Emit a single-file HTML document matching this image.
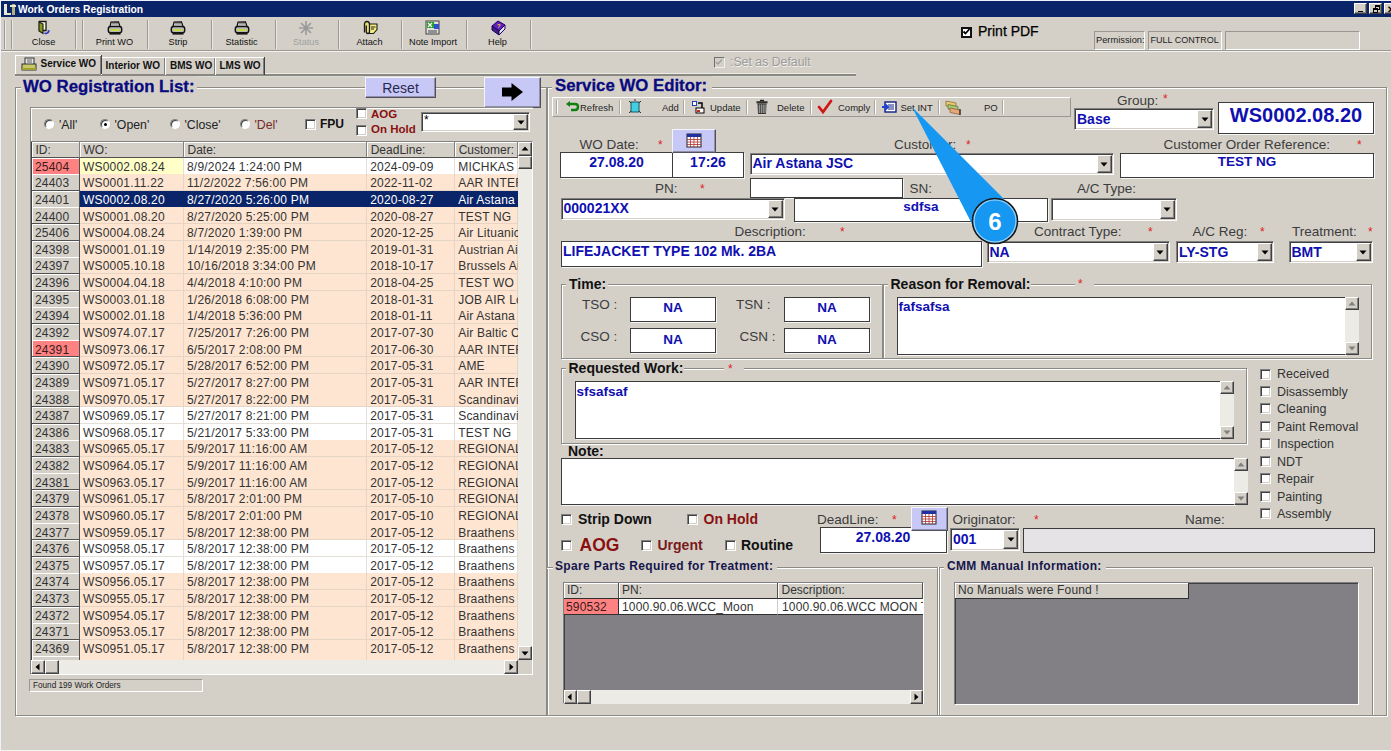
<!DOCTYPE html><html><head><meta charset="utf-8"><style>
*{margin:0;padding:0;box-sizing:border-box}
html,body{width:1391px;height:751px;overflow:hidden;background:#d4d0c8;font-family:"Liberation Sans",sans-serif;color:#000}
.a{position:absolute}
.t{white-space:nowrap}
.gb{border:1px solid #8c8a85;box-shadow:inset 1px 1px 0 #fff,1px 1px 0 #fff}
.tb{background:#fff;border:1px solid #3c3c3c;box-shadow:1px 1px 0 #f4f4f4}
.cb{background:#fff;border:1px solid;border-color:#808080 #fff #fff #808080;box-shadow:inset 1px 1px 0 #404040,inset -1px -1px 0 #d4d0c8}
.btn{background:#d4d0c8;border:1px solid;border-color:#fff #404040 #404040 #fff;box-shadow:inset -1px -1px 0 #808080}
.chk{background:#fff;border:1px solid;border-color:#808080 #fff #fff #808080;box-shadow:inset 1px 1px 0 #404040,inset -1px -1px 0 #d4d0c8}
.lav{background:#c8c8f6;border:1px solid;border-color:#f4f4ff #505060 #505060 #f4f4ff;box-shadow:inset -1px -1px 0 #9090a8}
.blue{color:#1010b0;font-weight:bold}
.red{color:#d02020}
.gl{color:#3c3c3c}
</style></head><body>
<div class="a " style="left:0px;top:0px;width:1391px;height:1px;background:#eef2fa"></div>
<div class="a " style="left:0px;top:0px;width:1px;height:751px;background:#eef2fa"></div>
<div class="a " style="left:1px;top:1px;width:1390px;height:16px;background:#0a246a"></div>
<div class="a t" style="left:18px;top:4.88px;font-size:10.3px;line-height:10.3px;text-align:left;white-space:nowrap;color:#fff;font-weight:bold">Work Orders Registration</div>
<svg class="a" style="left:3px;top:2px" width="14" height="14" viewBox="0 0 14 14"><rect x="1" y="2" width="3" height="11" fill="#e8e8d0"/><rect x="1" y="11" width="7" height="2" fill="#e8e8d0"/><rect x="9" y="2" width="3" height="11" fill="#b0b080"/><rect x="7" y="3" width="6" height="2" fill="#e8e8d0"/></svg>
<div class="a btn" style="left:1354px;top:3px;width:13px;height:11px;"></div>
<div class="a btn" style="left:1369px;top:3px;width:13px;height:11px;"></div>
<div class="a btn" style="left:1384px;top:3px;width:13px;height:11px;"></div>
<div class="a " style="left:1358px;top:10.5px;width:5px;height:1.5px;background:#000"></div>
<div class="a " style="left:1375px;top:5px;width:5px;height:5px;border:1px solid #000;border-top-width:2px"></div>
<div class="a " style="left:1372.5px;top:7.5px;width:5px;height:5px;background:#d4d0c8;border:1px solid #000;border-top-width:2px"></div>
<div class="a t" style="left:1387px;top:4.54px;font-size:10px;line-height:10px;text-align:left;white-space:nowrap;font-weight:bold">✕</div>
<div class="a " style="left:1px;top:50px;width:1390px;height:1px;background:#9a9893"></div>
<div class="a " style="left:1px;top:51px;width:1390px;height:1px;background:#f4f3ef"></div>
<div class="a " style="left:4px;top:20px;width:1px;height:29px;background:#9c9a95;box-shadow:1px 0 0 #ebe9e4"></div>
<div class="a " style="left:11px;top:20px;width:1px;height:29px;background:#9c9a95;box-shadow:1px 0 0 #ebe9e4"></div>
<div class="a " style="left:75px;top:20px;width:1px;height:29px;background:#9c9a95;box-shadow:1px 0 0 #ebe9e4"></div>
<div class="a " style="left:82px;top:20px;width:1px;height:29px;background:#9c9a95;box-shadow:1px 0 0 #ebe9e4"></div>
<div class="a " style="left:147px;top:20px;width:1px;height:29px;background:#9c9a95;box-shadow:1px 0 0 #ebe9e4"></div>
<div class="a " style="left:211px;top:20px;width:1px;height:29px;background:#9c9a95;box-shadow:1px 0 0 #ebe9e4"></div>
<div class="a " style="left:275px;top:20px;width:1px;height:29px;background:#9c9a95;box-shadow:1px 0 0 #ebe9e4"></div>
<div class="a " style="left:338px;top:20px;width:1px;height:29px;background:#9c9a95;box-shadow:1px 0 0 #ebe9e4"></div>
<div class="a " style="left:401px;top:20px;width:1px;height:29px;background:#9c9a95;box-shadow:1px 0 0 #ebe9e4"></div>
<div class="a " style="left:466px;top:20px;width:1px;height:29px;background:#9c9a95;box-shadow:1px 0 0 #ebe9e4"></div>
<div class="a " style="left:530px;top:20px;width:1px;height:29px;background:#9c9a95;box-shadow:1px 0 0 #ebe9e4"></div>
<div class="a t" style="left:3.5px;top:38.01px;font-size:9.2px;line-height:9.2px;text-align:center;width:80px;color:#111">Close</div>
<svg class="a" style="left:34.5px;top:19px" width="18" height="18" viewBox="0 0 18 18"><path d="M4.5 2.5 H11 V11.5 H4.5 Z" fill="#f8f8e0" stroke="#1a1a1a" stroke-width="1.3"/><path d="M4 3 L8 5 L8 14.5 L4 12 Z" fill="#8a9a18" stroke="#1a1a1a" stroke-width="1.1"/><path d="M9.5 14 q2.5 1.5 4.5 -2" stroke="#3040c0" stroke-width="1.6" fill="none"/><path d="M12.5 11 L15 11.5 L13.5 13.5 Z" fill="#3040c0"/></svg>
<div class="a t" style="left:74.5px;top:38.01px;font-size:9.2px;line-height:9.2px;text-align:center;width:80px;color:#111">Print WO</div>
<svg class="a" style="left:105.5px;top:19px" width="18" height="18" viewBox="0 0 18 18"><path d="M5 3.2 L12.5 2.8 L14 7.5 L4 7.5 Z" fill="#d0d0d0" stroke="#111" stroke-width="1.2"/><path d="M6 4.8 H12" stroke="#777"/><rect x="2.3" y="7.5" width="13.4" height="6.3" rx="2.2" fill="#b8b8b8" stroke="#111" stroke-width="1.4"/><rect x="4.5" y="10.3" width="9" height="1.6" fill="#c8e020"/><rect x="3.5" y="13.2" width="11" height="2.4" fill="#161616"/></svg>
<div class="a t" style="left:138px;top:38.01px;font-size:9.2px;line-height:9.2px;text-align:center;width:80px;color:#111">Strip</div>
<svg class="a" style="left:169px;top:19px" width="18" height="18" viewBox="0 0 18 18"><path d="M5 3.2 L12.5 2.8 L14 7.5 L4 7.5 Z" fill="#d0d0d0" stroke="#111" stroke-width="1.2"/><path d="M6 4.8 H12" stroke="#777"/><rect x="2.3" y="7.5" width="13.4" height="6.3" rx="2.2" fill="#b8b8b8" stroke="#111" stroke-width="1.4"/><rect x="4.5" y="10.3" width="9" height="1.6" fill="#c8e020"/><rect x="3.5" y="13.2" width="11" height="2.4" fill="#161616"/></svg>
<div class="a t" style="left:201.5px;top:38.01px;font-size:9.2px;line-height:9.2px;text-align:center;width:80px;color:#111">Statistic</div>
<svg class="a" style="left:232.5px;top:19px" width="18" height="18" viewBox="0 0 18 18"><path d="M5 3.2 L12.5 2.8 L14 7.5 L4 7.5 Z" fill="#d0d0d0" stroke="#111" stroke-width="1.2"/><path d="M6 4.8 H12" stroke="#777"/><rect x="2.3" y="7.5" width="13.4" height="6.3" rx="2.2" fill="#b8b8b8" stroke="#111" stroke-width="1.4"/><rect x="4.5" y="10.3" width="9" height="1.6" fill="#c8e020"/><rect x="3.5" y="13.2" width="11" height="2.4" fill="#161616"/></svg>
<div class="a t" style="left:266px;top:38.01px;font-size:9.2px;line-height:9.2px;text-align:center;width:80px;color:#a0a0a0">Status</div>
<svg class="a" style="left:297px;top:19px" width="18" height="18" viewBox="0 0 18 18"><g stroke="#9a9a9a" stroke-width="1.6"><path d="M9 2 V16 M2 9 H16 M4 4 L14 14 M14 4 L4 14"/></g></svg>
<div class="a t" style="left:329.5px;top:38.01px;font-size:9.2px;line-height:9.2px;text-align:center;width:80px;color:#111">Attach</div>
<svg class="a" style="left:360.5px;top:19px" width="18" height="18" viewBox="0 0 18 18"><path d="M6.5 5 H16 V10.5 L12.5 14.5 H6.5 Z" fill="#f4ee80" stroke="#1a1a1a" stroke-width="1.1"/><path d="M10 8 H14.5 M10 10 H13" stroke="#1a1a1a"/><path d="M3.5 13.5 V5.5 q0 -3 2.5 -3 q2.5 0 2.5 3 V12.5 q0 2 -1.6 2 q-1.6 0 -1.6 -2 V6.5" stroke="#1a1a1a" stroke-width="1.3" fill="#e8e070"/></svg>
<div class="a t" style="left:393px;top:38.01px;font-size:9.2px;line-height:9.2px;text-align:center;width:80px;color:#111">Note Import</div>
<svg class="a" style="left:424px;top:19px" width="18" height="18" viewBox="0 0 18 18"><rect x="2" y="2" width="13" height="13" fill="#e0e0e0" stroke="#404040"/><rect x="3" y="3" width="7" height="6" fill="#20a020"/><path d="M4 4 L8 8 M8 4 L4 8" stroke="#fff" stroke-width="1.2"/><rect x="10" y="5" width="5" height="5" fill="#3050d0"/><rect x="4" y="11" width="9" height="3" fill="#909090"/></svg>
<div class="a t" style="left:457.5px;top:38.01px;font-size:9.2px;line-height:9.2px;text-align:center;width:80px;color:#111">Help</div>
<svg class="a" style="left:488.5px;top:19px" width="18" height="18" viewBox="0 0 18 18"><path d="M3 7 L9 2 L16 6 L10 12 Z" fill="#6020c0" stroke="#200060"/><path d="M3 7 L10 12 L10 16 L3 11 Z" fill="#402080" stroke="#200060"/><path d="M10 12 L16 6 L16 10 L10 16 Z" fill="#e0e0f0" stroke="#200060"/><text x="8" y="9" font-size="6" fill="#f0d020" font-weight="bold" font-family="Liberation Sans">?</text></svg>
<div class="a " style="left:961px;top:26.5px;width:11px;height:11px;border:2px solid #111;background:#fff"></div>
<svg class="a" style="left:962px;top:27px" width="9" height="9" viewBox="0 0 9 9"><path d="M1.5 4.5 L3.5 6.5 L7.5 2" stroke="#000" stroke-width="1.8" fill="none"/></svg>
<div class="a t" style="left:978px;top:23.95px;font-size:14px;line-height:14px;text-align:left;white-space:nowrap;color:#000;-webkit-text-stroke:0.25px #000">Print PDF</div>
<div class="a " style="left:1093.5px;top:31px;width:51.5px;height:19px;border:1px solid;border-color:#9a9893 #fff #fff #9a9893"></div>
<div class="a " style="left:1148px;top:31px;width:74px;height:19px;border:1px solid;border-color:#9a9893 #fff #fff #9a9893"></div>
<div class="a " style="left:1225px;top:31px;width:135px;height:19px;border:1px solid;border-color:#9a9893 #fff #fff #9a9893"></div>
<div class="a t" style="left:1096px;top:36.13px;font-size:9.3px;line-height:9.3px;text-align:left;white-space:nowrap;color:#222">Permission:</div>
<div class="a t" style="left:1150.5px;top:36.38px;font-size:9px;line-height:9px;text-align:left;white-space:nowrap;color:#222">FULL CONTROL</div>
<div class="a " style="left:265px;top:73px;width:591px;height:1px;background:#ecebe6"></div>
<div class="a " style="left:15px;top:74px;width:841px;height:2px;background:#8a8883"></div>
<div class="a " style="left:15px;top:76px;width:841px;height:1px;background:#dcdad4"></div>
<div class="a " style="left:101px;top:57px;width:64px;height:18px;border-top:1px solid #fff;border-left:1px solid #fff;box-shadow:inset -1px 0 0 #808080,1px 0 0 #404040"></div>
<div class="a " style="left:165px;top:57px;width:50px;height:18px;border-top:1px solid #fff;border-left:1px solid #fff;box-shadow:inset -1px 0 0 #808080,1px 0 0 #404040"></div>
<div class="a " style="left:215px;top:57px;width:49px;height:18px;border-top:1px solid #fff;border-left:1px solid #fff;box-shadow:inset -1px 0 0 #808080,1px 0 0 #404040"></div>
<div class="a " style="left:15px;top:55px;width:86px;height:19px;background:#d4d0c8;border-top:1px solid #fff;border-left:1px solid #fff;box-shadow:inset -1px 0 0 #808080,1px 0 0 #404040"></div>
<svg class="a" style="left:21px;top:57px" width="16" height="15" viewBox="0 0 16 15"><rect x="4" y="1" width="9" height="7" fill="#e8e8e8" stroke="#303030"/><path d="M6 3H11M6 5H11" stroke="#606060"/><rect x="1" y="7" width="14" height="6" fill="#c8c868" stroke="#303030"/><rect x="1" y="11" width="14" height="2" fill="#a0a030"/></svg>
<div class="a t" style="left:40.5px;top:59.03px;font-size:10px;line-height:10px;text-align:left;white-space:nowrap;font-weight:bold;color:#111">Service WO</div>
<div class="a t" style="left:105.5px;top:61.03px;font-size:10px;line-height:10px;text-align:left;white-space:nowrap;font-weight:bold;color:#111">Interior WO</div>
<div class="a t" style="left:170px;top:61.03px;font-size:10px;line-height:10px;text-align:left;white-space:nowrap;font-weight:bold;color:#111">BMS WO</div>
<div class="a t" style="left:219.5px;top:61.03px;font-size:10px;line-height:10px;text-align:left;white-space:nowrap;font-weight:bold;color:#111">LMS WO</div>
<div class="a " style="left:714px;top:56.5px;width:11px;height:11px;border:1px solid;border-color:#707070 #f0f0f0 #f0f0f0 #707070;background:#d4d0c8"></div>
<svg class="a" style="left:715px;top:58px" width="8" height="8" viewBox="0 0 8 8"><path d="M1 4 L3 6 L7 1.5" stroke="#a0a0a0" stroke-width="1.5" fill="none"/></svg>
<div class="a t" style="left:730px;top:55.59px;font-size:12.3px;line-height:12.3px;text-align:left;white-space:nowrap;color:#9c9a96;text-shadow:0.5px 0.5px 0 #f4f4f4">:Set as Default</div>
<div class="a gb" style="left:15px;top:87px;width:532px;height:629px;"></div>
<div class="a " style="left:21px;top:76px;width:176px;height:14px;background:#d4d0c8"></div>
<div class="a t" style="left:23px;top:78.98px;font-size:16.8px;line-height:16.8px;text-align:left;white-space:nowrap;font-weight:bold;color:#0a0a80;-webkit-text-stroke:0.3px #0a0a80">WO Registration List:</div>
<div class="a lav" style="left:365px;top:77px;width:71px;height:21px;"></div>
<div class="a t" style="left:365px;top:80.65px;font-size:14px;line-height:14px;text-align:center;width:71px;color:#282850">Reset</div>
<div class="a lav" style="left:484px;top:77px;width:57px;height:31px;"></div>
<svg class="a" style="left:501px;top:82.5px" width="23" height="18" viewBox="0 0 23 18"><path d="M1 4.5 H10.5 V0 L22 9 L10.5 18 V13.5 H1 Z" fill="#000"/></svg>
<div class="a " style="left:30px;top:107px;width:503px;height:40px;border-top:1px solid #8c8a85;border-left:1px solid #8c8a85;box-shadow:inset 1px 1px 0 #fff"></div>
<div class="a" style="left:44px;top:119px;width:10px;height:10px;border-radius:50%;background:#fff;border:1px solid;border-color:#808080 #fff #fff #808080;box-shadow:inset 1px 1px 0 #404040"></div>
<div class="a t" style="left:59px;top:118.79px;font-size:12.3px;line-height:12.3px;text-align:left;white-space:nowrap;color:#222">'All'</div>
<div class="a" style="left:100px;top:119px;width:10px;height:10px;border-radius:50%;background:#fff;border:1px solid;border-color:#808080 #fff #fff #808080;box-shadow:inset 1px 1px 0 #404040"></div>
<div class="a" style="left:103.5px;top:122.5px;width:3px;height:3px;border-radius:50%;background:#000"></div>
<div class="a t" style="left:114.5px;top:118.79px;font-size:12.3px;line-height:12.3px;text-align:left;white-space:nowrap;color:#222">'Open'</div>
<div class="a" style="left:170px;top:119px;width:10px;height:10px;border-radius:50%;background:#fff;border:1px solid;border-color:#808080 #fff #fff #808080;box-shadow:inset 1px 1px 0 #404040"></div>
<div class="a t" style="left:184.5px;top:118.79px;font-size:12.3px;line-height:12.3px;text-align:left;white-space:nowrap;color:#222">'Close'</div>
<div class="a" style="left:240px;top:119px;width:10px;height:10px;border-radius:50%;background:#fff;border:1px solid;border-color:#808080 #fff #fff #808080;box-shadow:inset 1px 1px 0 #404040"></div>
<div class="a t" style="left:254.5px;top:118.79px;font-size:12.3px;line-height:12.3px;text-align:left;white-space:nowrap;color:#7a2a2a">'Del'</div>
<div class="a chk" style="left:304.5px;top:118.5px;width:11px;height:11px;"></div>
<div class="a t" style="left:320px;top:117.84px;font-size:12px;line-height:12px;text-align:left;white-space:nowrap;font-weight:bold;color:#111">FPU</div>
<div class="a chk" style="left:355.5px;top:107.5px;width:11px;height:11px;"></div>
<div class="a t" style="left:371px;top:108.77px;font-size:11.5px;line-height:11.5px;text-align:left;white-space:nowrap;font-weight:bold;color:#8a1010">AOG</div>
<div class="a chk" style="left:355.5px;top:124.5px;width:11px;height:11px;"></div>
<div class="a t" style="left:371px;top:124.27px;font-size:11.5px;line-height:11.5px;text-align:left;white-space:nowrap;font-weight:bold;color:#8a1010">On Hold</div>
<div class="a cb" style="left:421px;top:111.5px;width:109px;height:20px;"></div>
<div class="a btn" style="left:513px;top:113.5px;width:15px;height:16px;"></div>
<svg class="a" style="left:516.5px;top:119.5px" width="8" height="5" viewBox="0 0 8 5"><path d="M0.5 0.5 H7.5 L4 4.5 Z" fill="#000"/></svg>
<div class="a t" style="left:424px;top:114.34px;font-size:12px;line-height:12px;text-align:left;white-space:nowrap;color:#000">*</div>
<div class="a " style="left:30px;top:141px;width:503px;height:534px;background:#e8e6e2;border:1px solid;border-color:#808080 #fff #fff #808080;box-shadow:inset 1px 1px 0 #404040"></div>
<div class="a " style="left:31.5px;top:142px;width:48.0px;height:15.5px;background:#d4d0c8;border-right:1px solid #808080;border-bottom:1px solid #505050;box-shadow:inset 1px 1px 0 #fff"></div>
<div class="a t" style="left:35.5px;top:143.84px;font-size:12px;line-height:12px;text-align:left;white-space:nowrap;color:#333">ID:</div>
<div class="a " style="left:79.5px;top:142px;width:104.0px;height:15.5px;background:#d4d0c8;border-right:1px solid #808080;border-bottom:1px solid #505050;box-shadow:inset 1px 1px 0 #fff"></div>
<div class="a t" style="left:83.5px;top:143.84px;font-size:12px;line-height:12px;text-align:left;white-space:nowrap;color:#333">WO:</div>
<div class="a " style="left:183.5px;top:142px;width:183.2px;height:15.5px;background:#d4d0c8;border-right:1px solid #808080;border-bottom:1px solid #505050;box-shadow:inset 1px 1px 0 #fff"></div>
<div class="a t" style="left:187.5px;top:143.84px;font-size:12px;line-height:12px;text-align:left;white-space:nowrap;color:#333">Date:</div>
<div class="a " style="left:366.7px;top:142px;width:88.0px;height:15.5px;background:#d4d0c8;border-right:1px solid #808080;border-bottom:1px solid #505050;box-shadow:inset 1px 1px 0 #fff"></div>
<div class="a t" style="left:370.7px;top:143.84px;font-size:12px;line-height:12px;text-align:left;white-space:nowrap;color:#333">DeadLine:</div>
<div class="a " style="left:454.7px;top:142px;width:63.30000000000001px;height:15.5px;background:#d4d0c8;border-right:1px solid #808080;border-bottom:1px solid #505050;box-shadow:inset 1px 1px 0 #fff"></div>
<div class="a t" style="left:458.7px;top:143.84px;font-size:12px;line-height:12px;text-align:left;white-space:nowrap;color:#333">Customer:</div>
<div class="a" style="left:31.5px;top:157.5px;width:486.5px;height:502px;overflow:hidden">
<div class="a" style="left:0.0px;top:0.00px;width:48.0px;height:17.03px;background:#ff8282;border-right:1px solid #505050;border-bottom:1px solid #505050;box-shadow:inset 1px 1px 0 #fff"></div>
<div class="a t" style="left:3.5px;top:3.20px;font-size:12px;line-height:12px;letter-spacing:0.2px;color:#3a1a1a">25404</div>
<div class="a" style="left:48.0px;top:0.00px;width:104.0px;height:17.03px;background:#ffffc8;border-right:1px solid #e4e0d8;border-bottom:1px solid #e4e0d8"></div>
<div class="a t" style="left:51.5px;top:3.20px;font-size:12px;line-height:12px;letter-spacing:0.2px;color:#333">WS0002.08.24</div>
<div class="a" style="left:152.0px;top:0.00px;width:183.2px;height:17.03px;background:#ffffff;border-right:1px solid #e4e0d8;border-bottom:1px solid #e4e0d8"></div>
<div class="a t" style="left:155.5px;top:3.20px;font-size:12px;line-height:12px;letter-spacing:0.2px;color:#333">8/9/2024 1:24:00 PM</div>
<div class="a" style="left:335.2px;top:0.00px;width:88.0px;height:17.03px;background:#ffffff;border-right:1px solid #e4e0d8;border-bottom:1px solid #e4e0d8"></div>
<div class="a t" style="left:338.7px;top:3.20px;font-size:12px;line-height:12px;letter-spacing:0.2px;color:#333">2024-09-09</div>
<div class="a" style="left:423.2px;top:0.00px;width:63.30000000000001px;height:17.03px;background:#ffffff;border-right:1px solid #e4e0d8;border-bottom:1px solid #e4e0d8"></div>
<div class="a t" style="left:426.7px;top:3.20px;font-size:12px;line-height:12px;letter-spacing:0.2px;color:#333">MICHKAS T</div>
<div class="a" style="left:0.0px;top:16.63px;width:48.0px;height:17.03px;background:#d4d0c8;border-right:1px solid #505050;border-bottom:1px solid #505050;box-shadow:inset 1px 1px 0 #fff"></div>
<div class="a t" style="left:3.5px;top:19.83px;font-size:12px;line-height:12px;letter-spacing:0.2px;color:#333">24403</div>
<div class="a" style="left:48.0px;top:16.63px;width:104.0px;height:17.03px;background:#fde5d1;border-right:1px solid #e6d4c4;border-bottom:1px solid #e6d4c4"></div>
<div class="a t" style="left:51.5px;top:19.83px;font-size:12px;line-height:12px;letter-spacing:0.2px;color:#333">WS0001.11.22</div>
<div class="a" style="left:152.0px;top:16.63px;width:183.2px;height:17.03px;background:#fde5d1;border-right:1px solid #e6d4c4;border-bottom:1px solid #e6d4c4"></div>
<div class="a t" style="left:155.5px;top:19.83px;font-size:12px;line-height:12px;letter-spacing:0.2px;color:#333">11/2/2022 7:56:00 PM</div>
<div class="a" style="left:335.2px;top:16.63px;width:88.0px;height:17.03px;background:#fde5d1;border-right:1px solid #e6d4c4;border-bottom:1px solid #e6d4c4"></div>
<div class="a t" style="left:338.7px;top:19.83px;font-size:12px;line-height:12px;letter-spacing:0.2px;color:#333">2022-11-02</div>
<div class="a" style="left:423.2px;top:16.63px;width:63.30000000000001px;height:17.03px;background:#fde5d1;border-right:1px solid #e6d4c4;border-bottom:1px solid #e6d4c4"></div>
<div class="a t" style="left:426.7px;top:19.83px;font-size:12px;line-height:12px;letter-spacing:0.2px;color:#333">AAR INTER</div>
<div class="a" style="left:0.0px;top:33.26px;width:48.0px;height:17.03px;background:#d4d0c8;border-right:1px solid #505050;border-bottom:1px solid #505050;box-shadow:inset 1px 1px 0 #fff"></div>
<div class="a t" style="left:3.5px;top:36.46px;font-size:12px;line-height:12px;letter-spacing:0.2px;color:#333">24401</div>
<div class="a" style="left:48.0px;top:33.26px;width:104.0px;height:17.03px;background:#0a246a;border-right:1px solid #0a246a;border-bottom:1px solid #0a246a"></div>
<div class="a t" style="left:51.5px;top:36.46px;font-size:12px;line-height:12px;letter-spacing:0.2px;color:#fff">WS0002.08.20</div>
<div class="a" style="left:152.0px;top:33.26px;width:183.2px;height:17.03px;background:#0a246a;border-right:1px solid #0a246a;border-bottom:1px solid #0a246a"></div>
<div class="a t" style="left:155.5px;top:36.46px;font-size:12px;line-height:12px;letter-spacing:0.2px;color:#fff">8/27/2020 5:26:00 PM</div>
<div class="a" style="left:335.2px;top:33.26px;width:88.0px;height:17.03px;background:#0a246a;border-right:1px solid #0a246a;border-bottom:1px solid #0a246a"></div>
<div class="a t" style="left:338.7px;top:36.46px;font-size:12px;line-height:12px;letter-spacing:0.2px;color:#fff">2020-08-27</div>
<div class="a" style="left:423.2px;top:33.26px;width:63.30000000000001px;height:17.03px;background:#0a246a;border-right:1px solid #0a246a;border-bottom:1px solid #0a246a"></div>
<div class="a t" style="left:426.7px;top:36.46px;font-size:12px;line-height:12px;letter-spacing:0.2px;color:#fff">Air Astana JSC</div>
<div class="a" style="left:0.0px;top:49.89px;width:48.0px;height:17.03px;background:#d4d0c8;border-right:1px solid #505050;border-bottom:1px solid #505050;box-shadow:inset 1px 1px 0 #fff"></div>
<div class="a t" style="left:3.5px;top:53.09px;font-size:12px;line-height:12px;letter-spacing:0.2px;color:#333">24400</div>
<div class="a" style="left:48.0px;top:49.89px;width:104.0px;height:17.03px;background:#fde5d1;border-right:1px solid #e6d4c4;border-bottom:1px solid #e6d4c4"></div>
<div class="a t" style="left:51.5px;top:53.09px;font-size:12px;line-height:12px;letter-spacing:0.2px;color:#333">WS0001.08.20</div>
<div class="a" style="left:152.0px;top:49.89px;width:183.2px;height:17.03px;background:#fde5d1;border-right:1px solid #e6d4c4;border-bottom:1px solid #e6d4c4"></div>
<div class="a t" style="left:155.5px;top:53.09px;font-size:12px;line-height:12px;letter-spacing:0.2px;color:#333">8/27/2020 5:25:00 PM</div>
<div class="a" style="left:335.2px;top:49.89px;width:88.0px;height:17.03px;background:#fde5d1;border-right:1px solid #e6d4c4;border-bottom:1px solid #e6d4c4"></div>
<div class="a t" style="left:338.7px;top:53.09px;font-size:12px;line-height:12px;letter-spacing:0.2px;color:#333">2020-08-27</div>
<div class="a" style="left:423.2px;top:49.89px;width:63.30000000000001px;height:17.03px;background:#fde5d1;border-right:1px solid #e6d4c4;border-bottom:1px solid #e6d4c4"></div>
<div class="a t" style="left:426.7px;top:53.09px;font-size:12px;line-height:12px;letter-spacing:0.2px;color:#333">TEST NG</div>
<div class="a" style="left:0.0px;top:66.52px;width:48.0px;height:17.03px;background:#d4d0c8;border-right:1px solid #505050;border-bottom:1px solid #505050;box-shadow:inset 1px 1px 0 #fff"></div>
<div class="a t" style="left:3.5px;top:69.72px;font-size:12px;line-height:12px;letter-spacing:0.2px;color:#333">25406</div>
<div class="a" style="left:48.0px;top:66.52px;width:104.0px;height:17.03px;background:#fde5d1;border-right:1px solid #e6d4c4;border-bottom:1px solid #e6d4c4"></div>
<div class="a t" style="left:51.5px;top:69.72px;font-size:12px;line-height:12px;letter-spacing:0.2px;color:#333">WS0004.08.24</div>
<div class="a" style="left:152.0px;top:66.52px;width:183.2px;height:17.03px;background:#fde5d1;border-right:1px solid #e6d4c4;border-bottom:1px solid #e6d4c4"></div>
<div class="a t" style="left:155.5px;top:69.72px;font-size:12px;line-height:12px;letter-spacing:0.2px;color:#333">8/7/2020 1:39:00 PM</div>
<div class="a" style="left:335.2px;top:66.52px;width:88.0px;height:17.03px;background:#fde5d1;border-right:1px solid #e6d4c4;border-bottom:1px solid #e6d4c4"></div>
<div class="a t" style="left:338.7px;top:69.72px;font-size:12px;line-height:12px;letter-spacing:0.2px;color:#333">2020-12-25</div>
<div class="a" style="left:423.2px;top:66.52px;width:63.30000000000001px;height:17.03px;background:#fde5d1;border-right:1px solid #e6d4c4;border-bottom:1px solid #e6d4c4"></div>
<div class="a t" style="left:426.7px;top:69.72px;font-size:12px;line-height:12px;letter-spacing:0.2px;color:#333">Air Lituanica</div>
<div class="a" style="left:0.0px;top:83.15px;width:48.0px;height:17.03px;background:#d4d0c8;border-right:1px solid #505050;border-bottom:1px solid #505050;box-shadow:inset 1px 1px 0 #fff"></div>
<div class="a t" style="left:3.5px;top:86.35px;font-size:12px;line-height:12px;letter-spacing:0.2px;color:#333">24398</div>
<div class="a" style="left:48.0px;top:83.15px;width:104.0px;height:17.03px;background:#fde5d1;border-right:1px solid #e6d4c4;border-bottom:1px solid #e6d4c4"></div>
<div class="a t" style="left:51.5px;top:86.35px;font-size:12px;line-height:12px;letter-spacing:0.2px;color:#333">WS0001.01.19</div>
<div class="a" style="left:152.0px;top:83.15px;width:183.2px;height:17.03px;background:#fde5d1;border-right:1px solid #e6d4c4;border-bottom:1px solid #e6d4c4"></div>
<div class="a t" style="left:155.5px;top:86.35px;font-size:12px;line-height:12px;letter-spacing:0.2px;color:#333">1/14/2019 2:35:00 PM</div>
<div class="a" style="left:335.2px;top:83.15px;width:88.0px;height:17.03px;background:#fde5d1;border-right:1px solid #e6d4c4;border-bottom:1px solid #e6d4c4"></div>
<div class="a t" style="left:338.7px;top:86.35px;font-size:12px;line-height:12px;letter-spacing:0.2px;color:#333">2019-01-31</div>
<div class="a" style="left:423.2px;top:83.15px;width:63.30000000000001px;height:17.03px;background:#fde5d1;border-right:1px solid #e6d4c4;border-bottom:1px solid #e6d4c4"></div>
<div class="a t" style="left:426.7px;top:86.35px;font-size:12px;line-height:12px;letter-spacing:0.2px;color:#333">Austrian Airlines</div>
<div class="a" style="left:0.0px;top:99.78px;width:48.0px;height:17.03px;background:#d4d0c8;border-right:1px solid #505050;border-bottom:1px solid #505050;box-shadow:inset 1px 1px 0 #fff"></div>
<div class="a t" style="left:3.5px;top:102.98px;font-size:12px;line-height:12px;letter-spacing:0.2px;color:#333">24397</div>
<div class="a" style="left:48.0px;top:99.78px;width:104.0px;height:17.03px;background:#fde5d1;border-right:1px solid #e6d4c4;border-bottom:1px solid #e6d4c4"></div>
<div class="a t" style="left:51.5px;top:102.98px;font-size:12px;line-height:12px;letter-spacing:0.2px;color:#333">WS0005.10.18</div>
<div class="a" style="left:152.0px;top:99.78px;width:183.2px;height:17.03px;background:#fde5d1;border-right:1px solid #e6d4c4;border-bottom:1px solid #e6d4c4"></div>
<div class="a t" style="left:155.5px;top:102.98px;font-size:12px;line-height:12px;letter-spacing:0.2px;color:#333">10/16/2018 3:34:00 PM</div>
<div class="a" style="left:335.2px;top:99.78px;width:88.0px;height:17.03px;background:#fde5d1;border-right:1px solid #e6d4c4;border-bottom:1px solid #e6d4c4"></div>
<div class="a t" style="left:338.7px;top:102.98px;font-size:12px;line-height:12px;letter-spacing:0.2px;color:#333">2018-10-17</div>
<div class="a" style="left:423.2px;top:99.78px;width:63.30000000000001px;height:17.03px;background:#fde5d1;border-right:1px solid #e6d4c4;border-bottom:1px solid #e6d4c4"></div>
<div class="a t" style="left:426.7px;top:102.98px;font-size:12px;line-height:12px;letter-spacing:0.2px;color:#333">Brussels Airlines</div>
<div class="a" style="left:0.0px;top:116.41px;width:48.0px;height:17.03px;background:#d4d0c8;border-right:1px solid #505050;border-bottom:1px solid #505050;box-shadow:inset 1px 1px 0 #fff"></div>
<div class="a t" style="left:3.5px;top:119.61px;font-size:12px;line-height:12px;letter-spacing:0.2px;color:#333">24396</div>
<div class="a" style="left:48.0px;top:116.41px;width:104.0px;height:17.03px;background:#fde5d1;border-right:1px solid #e6d4c4;border-bottom:1px solid #e6d4c4"></div>
<div class="a t" style="left:51.5px;top:119.61px;font-size:12px;line-height:12px;letter-spacing:0.2px;color:#333">WS0004.04.18</div>
<div class="a" style="left:152.0px;top:116.41px;width:183.2px;height:17.03px;background:#fde5d1;border-right:1px solid #e6d4c4;border-bottom:1px solid #e6d4c4"></div>
<div class="a t" style="left:155.5px;top:119.61px;font-size:12px;line-height:12px;letter-spacing:0.2px;color:#333">4/4/2018 4:10:00 PM</div>
<div class="a" style="left:335.2px;top:116.41px;width:88.0px;height:17.03px;background:#fde5d1;border-right:1px solid #e6d4c4;border-bottom:1px solid #e6d4c4"></div>
<div class="a t" style="left:338.7px;top:119.61px;font-size:12px;line-height:12px;letter-spacing:0.2px;color:#333">2018-04-25</div>
<div class="a" style="left:423.2px;top:116.41px;width:63.30000000000001px;height:17.03px;background:#fde5d1;border-right:1px solid #e6d4c4;border-bottom:1px solid #e6d4c4"></div>
<div class="a t" style="left:426.7px;top:119.61px;font-size:12px;line-height:12px;letter-spacing:0.2px;color:#333">TEST WO</div>
<div class="a" style="left:0.0px;top:133.04px;width:48.0px;height:17.03px;background:#d4d0c8;border-right:1px solid #505050;border-bottom:1px solid #505050;box-shadow:inset 1px 1px 0 #fff"></div>
<div class="a t" style="left:3.5px;top:136.24px;font-size:12px;line-height:12px;letter-spacing:0.2px;color:#333">24395</div>
<div class="a" style="left:48.0px;top:133.04px;width:104.0px;height:17.03px;background:#fde5d1;border-right:1px solid #e6d4c4;border-bottom:1px solid #e6d4c4"></div>
<div class="a t" style="left:51.5px;top:136.24px;font-size:12px;line-height:12px;letter-spacing:0.2px;color:#333">WS0003.01.18</div>
<div class="a" style="left:152.0px;top:133.04px;width:183.2px;height:17.03px;background:#fde5d1;border-right:1px solid #e6d4c4;border-bottom:1px solid #e6d4c4"></div>
<div class="a t" style="left:155.5px;top:136.24px;font-size:12px;line-height:12px;letter-spacing:0.2px;color:#333">1/26/2018 6:08:00 PM</div>
<div class="a" style="left:335.2px;top:133.04px;width:88.0px;height:17.03px;background:#fde5d1;border-right:1px solid #e6d4c4;border-bottom:1px solid #e6d4c4"></div>
<div class="a t" style="left:338.7px;top:136.24px;font-size:12px;line-height:12px;letter-spacing:0.2px;color:#333">2018-01-31</div>
<div class="a" style="left:423.2px;top:133.04px;width:63.30000000000001px;height:17.03px;background:#fde5d1;border-right:1px solid #e6d4c4;border-bottom:1px solid #e6d4c4"></div>
<div class="a t" style="left:426.7px;top:136.24px;font-size:12px;line-height:12px;letter-spacing:0.2px;color:#333">JOB AIR Logistics</div>
<div class="a" style="left:0.0px;top:149.67px;width:48.0px;height:17.03px;background:#d4d0c8;border-right:1px solid #505050;border-bottom:1px solid #505050;box-shadow:inset 1px 1px 0 #fff"></div>
<div class="a t" style="left:3.5px;top:152.87px;font-size:12px;line-height:12px;letter-spacing:0.2px;color:#333">24394</div>
<div class="a" style="left:48.0px;top:149.67px;width:104.0px;height:17.03px;background:#fde5d1;border-right:1px solid #e6d4c4;border-bottom:1px solid #e6d4c4"></div>
<div class="a t" style="left:51.5px;top:152.87px;font-size:12px;line-height:12px;letter-spacing:0.2px;color:#333">WS0002.01.18</div>
<div class="a" style="left:152.0px;top:149.67px;width:183.2px;height:17.03px;background:#fde5d1;border-right:1px solid #e6d4c4;border-bottom:1px solid #e6d4c4"></div>
<div class="a t" style="left:155.5px;top:152.87px;font-size:12px;line-height:12px;letter-spacing:0.2px;color:#333">1/4/2018 5:36:00 PM</div>
<div class="a" style="left:335.2px;top:149.67px;width:88.0px;height:17.03px;background:#fde5d1;border-right:1px solid #e6d4c4;border-bottom:1px solid #e6d4c4"></div>
<div class="a t" style="left:338.7px;top:152.87px;font-size:12px;line-height:12px;letter-spacing:0.2px;color:#333">2018-01-11</div>
<div class="a" style="left:423.2px;top:149.67px;width:63.30000000000001px;height:17.03px;background:#fde5d1;border-right:1px solid #e6d4c4;border-bottom:1px solid #e6d4c4"></div>
<div class="a t" style="left:426.7px;top:152.87px;font-size:12px;line-height:12px;letter-spacing:0.2px;color:#333">Air Astana JSC</div>
<div class="a" style="left:0.0px;top:166.30px;width:48.0px;height:17.03px;background:#d4d0c8;border-right:1px solid #505050;border-bottom:1px solid #505050;box-shadow:inset 1px 1px 0 #fff"></div>
<div class="a t" style="left:3.5px;top:169.50px;font-size:12px;line-height:12px;letter-spacing:0.2px;color:#333">24392</div>
<div class="a" style="left:48.0px;top:166.30px;width:104.0px;height:17.03px;background:#fde5d1;border-right:1px solid #e6d4c4;border-bottom:1px solid #e6d4c4"></div>
<div class="a t" style="left:51.5px;top:169.50px;font-size:12px;line-height:12px;letter-spacing:0.2px;color:#333">WS0974.07.17</div>
<div class="a" style="left:152.0px;top:166.30px;width:183.2px;height:17.03px;background:#fde5d1;border-right:1px solid #e6d4c4;border-bottom:1px solid #e6d4c4"></div>
<div class="a t" style="left:155.5px;top:169.50px;font-size:12px;line-height:12px;letter-spacing:0.2px;color:#333">7/25/2017 7:26:00 PM</div>
<div class="a" style="left:335.2px;top:166.30px;width:88.0px;height:17.03px;background:#fde5d1;border-right:1px solid #e6d4c4;border-bottom:1px solid #e6d4c4"></div>
<div class="a t" style="left:338.7px;top:169.50px;font-size:12px;line-height:12px;letter-spacing:0.2px;color:#333">2017-07-30</div>
<div class="a" style="left:423.2px;top:166.30px;width:63.30000000000001px;height:17.03px;background:#fde5d1;border-right:1px solid #e6d4c4;border-bottom:1px solid #e6d4c4"></div>
<div class="a t" style="left:426.7px;top:169.50px;font-size:12px;line-height:12px;letter-spacing:0.2px;color:#333">Air Baltic Corp</div>
<div class="a" style="left:0.0px;top:182.93px;width:48.0px;height:17.03px;background:#ff8282;border-right:1px solid #505050;border-bottom:1px solid #505050;box-shadow:inset 1px 1px 0 #fff"></div>
<div class="a t" style="left:3.5px;top:186.13px;font-size:12px;line-height:12px;letter-spacing:0.2px;color:#3a1a1a">24391</div>
<div class="a" style="left:48.0px;top:182.93px;width:104.0px;height:17.03px;background:#fde5d1;border-right:1px solid #e6d4c4;border-bottom:1px solid #e6d4c4"></div>
<div class="a t" style="left:51.5px;top:186.13px;font-size:12px;line-height:12px;letter-spacing:0.2px;color:#333">WS0973.06.17</div>
<div class="a" style="left:152.0px;top:182.93px;width:183.2px;height:17.03px;background:#fde5d1;border-right:1px solid #e6d4c4;border-bottom:1px solid #e6d4c4"></div>
<div class="a t" style="left:155.5px;top:186.13px;font-size:12px;line-height:12px;letter-spacing:0.2px;color:#333">6/5/2017 2:08:00 PM</div>
<div class="a" style="left:335.2px;top:182.93px;width:88.0px;height:17.03px;background:#fde5d1;border-right:1px solid #e6d4c4;border-bottom:1px solid #e6d4c4"></div>
<div class="a t" style="left:338.7px;top:186.13px;font-size:12px;line-height:12px;letter-spacing:0.2px;color:#333">2017-06-30</div>
<div class="a" style="left:423.2px;top:182.93px;width:63.30000000000001px;height:17.03px;background:#fde5d1;border-right:1px solid #e6d4c4;border-bottom:1px solid #e6d4c4"></div>
<div class="a t" style="left:426.7px;top:186.13px;font-size:12px;line-height:12px;letter-spacing:0.2px;color:#333">AAR INTERNATIONAL</div>
<div class="a" style="left:0.0px;top:199.56px;width:48.0px;height:17.03px;background:#d4d0c8;border-right:1px solid #505050;border-bottom:1px solid #505050;box-shadow:inset 1px 1px 0 #fff"></div>
<div class="a t" style="left:3.5px;top:202.76px;font-size:12px;line-height:12px;letter-spacing:0.2px;color:#333">24390</div>
<div class="a" style="left:48.0px;top:199.56px;width:104.0px;height:17.03px;background:#fde5d1;border-right:1px solid #e6d4c4;border-bottom:1px solid #e6d4c4"></div>
<div class="a t" style="left:51.5px;top:202.76px;font-size:12px;line-height:12px;letter-spacing:0.2px;color:#333">WS0972.05.17</div>
<div class="a" style="left:152.0px;top:199.56px;width:183.2px;height:17.03px;background:#fde5d1;border-right:1px solid #e6d4c4;border-bottom:1px solid #e6d4c4"></div>
<div class="a t" style="left:155.5px;top:202.76px;font-size:12px;line-height:12px;letter-spacing:0.2px;color:#333">5/28/2017 6:52:00 PM</div>
<div class="a" style="left:335.2px;top:199.56px;width:88.0px;height:17.03px;background:#fde5d1;border-right:1px solid #e6d4c4;border-bottom:1px solid #e6d4c4"></div>
<div class="a t" style="left:338.7px;top:202.76px;font-size:12px;line-height:12px;letter-spacing:0.2px;color:#333">2017-05-31</div>
<div class="a" style="left:423.2px;top:199.56px;width:63.30000000000001px;height:17.03px;background:#fde5d1;border-right:1px solid #e6d4c4;border-bottom:1px solid #e6d4c4"></div>
<div class="a t" style="left:426.7px;top:202.76px;font-size:12px;line-height:12px;letter-spacing:0.2px;color:#333">AME</div>
<div class="a" style="left:0.0px;top:216.19px;width:48.0px;height:17.03px;background:#d4d0c8;border-right:1px solid #505050;border-bottom:1px solid #505050;box-shadow:inset 1px 1px 0 #fff"></div>
<div class="a t" style="left:3.5px;top:219.39px;font-size:12px;line-height:12px;letter-spacing:0.2px;color:#333">24389</div>
<div class="a" style="left:48.0px;top:216.19px;width:104.0px;height:17.03px;background:#fde5d1;border-right:1px solid #e6d4c4;border-bottom:1px solid #e6d4c4"></div>
<div class="a t" style="left:51.5px;top:219.39px;font-size:12px;line-height:12px;letter-spacing:0.2px;color:#333">WS0971.05.17</div>
<div class="a" style="left:152.0px;top:216.19px;width:183.2px;height:17.03px;background:#fde5d1;border-right:1px solid #e6d4c4;border-bottom:1px solid #e6d4c4"></div>
<div class="a t" style="left:155.5px;top:219.39px;font-size:12px;line-height:12px;letter-spacing:0.2px;color:#333">5/27/2017 8:27:00 PM</div>
<div class="a" style="left:335.2px;top:216.19px;width:88.0px;height:17.03px;background:#fde5d1;border-right:1px solid #e6d4c4;border-bottom:1px solid #e6d4c4"></div>
<div class="a t" style="left:338.7px;top:219.39px;font-size:12px;line-height:12px;letter-spacing:0.2px;color:#333">2017-05-31</div>
<div class="a" style="left:423.2px;top:216.19px;width:63.30000000000001px;height:17.03px;background:#fde5d1;border-right:1px solid #e6d4c4;border-bottom:1px solid #e6d4c4"></div>
<div class="a t" style="left:426.7px;top:219.39px;font-size:12px;line-height:12px;letter-spacing:0.2px;color:#333">AAR INTERNATIONAL</div>
<div class="a" style="left:0.0px;top:232.82px;width:48.0px;height:17.03px;background:#d4d0c8;border-right:1px solid #505050;border-bottom:1px solid #505050;box-shadow:inset 1px 1px 0 #fff"></div>
<div class="a t" style="left:3.5px;top:236.02px;font-size:12px;line-height:12px;letter-spacing:0.2px;color:#333">24388</div>
<div class="a" style="left:48.0px;top:232.82px;width:104.0px;height:17.03px;background:#fde5d1;border-right:1px solid #e6d4c4;border-bottom:1px solid #e6d4c4"></div>
<div class="a t" style="left:51.5px;top:236.02px;font-size:12px;line-height:12px;letter-spacing:0.2px;color:#333">WS0970.05.17</div>
<div class="a" style="left:152.0px;top:232.82px;width:183.2px;height:17.03px;background:#fde5d1;border-right:1px solid #e6d4c4;border-bottom:1px solid #e6d4c4"></div>
<div class="a t" style="left:155.5px;top:236.02px;font-size:12px;line-height:12px;letter-spacing:0.2px;color:#333">5/27/2017 8:22:00 PM</div>
<div class="a" style="left:335.2px;top:232.82px;width:88.0px;height:17.03px;background:#fde5d1;border-right:1px solid #e6d4c4;border-bottom:1px solid #e6d4c4"></div>
<div class="a t" style="left:338.7px;top:236.02px;font-size:12px;line-height:12px;letter-spacing:0.2px;color:#333">2017-05-31</div>
<div class="a" style="left:423.2px;top:232.82px;width:63.30000000000001px;height:17.03px;background:#fde5d1;border-right:1px solid #e6d4c4;border-bottom:1px solid #e6d4c4"></div>
<div class="a t" style="left:426.7px;top:236.02px;font-size:12px;line-height:12px;letter-spacing:0.2px;color:#333">Scandinavian</div>
<div class="a" style="left:0.0px;top:249.45px;width:48.0px;height:17.03px;background:#d4d0c8;border-right:1px solid #505050;border-bottom:1px solid #505050;box-shadow:inset 1px 1px 0 #fff"></div>
<div class="a t" style="left:3.5px;top:252.65px;font-size:12px;line-height:12px;letter-spacing:0.2px;color:#333">24387</div>
<div class="a" style="left:48.0px;top:249.45px;width:104.0px;height:17.03px;background:#ffffff;border-right:1px solid #e4e0d8;border-bottom:1px solid #e4e0d8"></div>
<div class="a t" style="left:51.5px;top:252.65px;font-size:12px;line-height:12px;letter-spacing:0.2px;color:#333">WS0969.05.17</div>
<div class="a" style="left:152.0px;top:249.45px;width:183.2px;height:17.03px;background:#ffffff;border-right:1px solid #e4e0d8;border-bottom:1px solid #e4e0d8"></div>
<div class="a t" style="left:155.5px;top:252.65px;font-size:12px;line-height:12px;letter-spacing:0.2px;color:#333">5/27/2017 8:21:00 PM</div>
<div class="a" style="left:335.2px;top:249.45px;width:88.0px;height:17.03px;background:#ffffff;border-right:1px solid #e4e0d8;border-bottom:1px solid #e4e0d8"></div>
<div class="a t" style="left:338.7px;top:252.65px;font-size:12px;line-height:12px;letter-spacing:0.2px;color:#333">2017-05-31</div>
<div class="a" style="left:423.2px;top:249.45px;width:63.30000000000001px;height:17.03px;background:#ffffff;border-right:1px solid #e4e0d8;border-bottom:1px solid #e4e0d8"></div>
<div class="a t" style="left:426.7px;top:252.65px;font-size:12px;line-height:12px;letter-spacing:0.2px;color:#333">Scandinavian</div>
<div class="a" style="left:0.0px;top:266.08px;width:48.0px;height:17.03px;background:#d4d0c8;border-right:1px solid #505050;border-bottom:1px solid #505050;box-shadow:inset 1px 1px 0 #fff"></div>
<div class="a t" style="left:3.5px;top:269.28px;font-size:12px;line-height:12px;letter-spacing:0.2px;color:#333">24386</div>
<div class="a" style="left:48.0px;top:266.08px;width:104.0px;height:17.03px;background:#ffffff;border-right:1px solid #e4e0d8;border-bottom:1px solid #e4e0d8"></div>
<div class="a t" style="left:51.5px;top:269.28px;font-size:12px;line-height:12px;letter-spacing:0.2px;color:#333">WS0968.05.17</div>
<div class="a" style="left:152.0px;top:266.08px;width:183.2px;height:17.03px;background:#ffffff;border-right:1px solid #e4e0d8;border-bottom:1px solid #e4e0d8"></div>
<div class="a t" style="left:155.5px;top:269.28px;font-size:12px;line-height:12px;letter-spacing:0.2px;color:#333">5/21/2017 5:33:00 PM</div>
<div class="a" style="left:335.2px;top:266.08px;width:88.0px;height:17.03px;background:#ffffff;border-right:1px solid #e4e0d8;border-bottom:1px solid #e4e0d8"></div>
<div class="a t" style="left:338.7px;top:269.28px;font-size:12px;line-height:12px;letter-spacing:0.2px;color:#333">2017-05-31</div>
<div class="a" style="left:423.2px;top:266.08px;width:63.30000000000001px;height:17.03px;background:#ffffff;border-right:1px solid #e4e0d8;border-bottom:1px solid #e4e0d8"></div>
<div class="a t" style="left:426.7px;top:269.28px;font-size:12px;line-height:12px;letter-spacing:0.2px;color:#333">TEST NG</div>
<div class="a" style="left:0.0px;top:282.71px;width:48.0px;height:17.03px;background:#d4d0c8;border-right:1px solid #505050;border-bottom:1px solid #505050;box-shadow:inset 1px 1px 0 #fff"></div>
<div class="a t" style="left:3.5px;top:285.91px;font-size:12px;line-height:12px;letter-spacing:0.2px;color:#333">24383</div>
<div class="a" style="left:48.0px;top:282.71px;width:104.0px;height:17.03px;background:#fde5d1;border-right:1px solid #e6d4c4;border-bottom:1px solid #e6d4c4"></div>
<div class="a t" style="left:51.5px;top:285.91px;font-size:12px;line-height:12px;letter-spacing:0.2px;color:#333">WS0965.05.17</div>
<div class="a" style="left:152.0px;top:282.71px;width:183.2px;height:17.03px;background:#fde5d1;border-right:1px solid #e6d4c4;border-bottom:1px solid #e6d4c4"></div>
<div class="a t" style="left:155.5px;top:285.91px;font-size:12px;line-height:12px;letter-spacing:0.2px;color:#333">5/9/2017 11:16:00 AM</div>
<div class="a" style="left:335.2px;top:282.71px;width:88.0px;height:17.03px;background:#fde5d1;border-right:1px solid #e6d4c4;border-bottom:1px solid #e6d4c4"></div>
<div class="a t" style="left:338.7px;top:285.91px;font-size:12px;line-height:12px;letter-spacing:0.2px;color:#333">2017-05-12</div>
<div class="a" style="left:423.2px;top:282.71px;width:63.30000000000001px;height:17.03px;background:#fde5d1;border-right:1px solid #e6d4c4;border-bottom:1px solid #e6d4c4"></div>
<div class="a t" style="left:426.7px;top:285.91px;font-size:12px;line-height:12px;letter-spacing:0.2px;color:#333">REGIONAL</div>
<div class="a" style="left:0.0px;top:299.34px;width:48.0px;height:17.03px;background:#d4d0c8;border-right:1px solid #505050;border-bottom:1px solid #505050;box-shadow:inset 1px 1px 0 #fff"></div>
<div class="a t" style="left:3.5px;top:302.54px;font-size:12px;line-height:12px;letter-spacing:0.2px;color:#333">24382</div>
<div class="a" style="left:48.0px;top:299.34px;width:104.0px;height:17.03px;background:#fde5d1;border-right:1px solid #e6d4c4;border-bottom:1px solid #e6d4c4"></div>
<div class="a t" style="left:51.5px;top:302.54px;font-size:12px;line-height:12px;letter-spacing:0.2px;color:#333">WS0964.05.17</div>
<div class="a" style="left:152.0px;top:299.34px;width:183.2px;height:17.03px;background:#fde5d1;border-right:1px solid #e6d4c4;border-bottom:1px solid #e6d4c4"></div>
<div class="a t" style="left:155.5px;top:302.54px;font-size:12px;line-height:12px;letter-spacing:0.2px;color:#333">5/9/2017 11:16:00 AM</div>
<div class="a" style="left:335.2px;top:299.34px;width:88.0px;height:17.03px;background:#fde5d1;border-right:1px solid #e6d4c4;border-bottom:1px solid #e6d4c4"></div>
<div class="a t" style="left:338.7px;top:302.54px;font-size:12px;line-height:12px;letter-spacing:0.2px;color:#333">2017-05-12</div>
<div class="a" style="left:423.2px;top:299.34px;width:63.30000000000001px;height:17.03px;background:#fde5d1;border-right:1px solid #e6d4c4;border-bottom:1px solid #e6d4c4"></div>
<div class="a t" style="left:426.7px;top:302.54px;font-size:12px;line-height:12px;letter-spacing:0.2px;color:#333">REGIONAL</div>
<div class="a" style="left:0.0px;top:315.97px;width:48.0px;height:17.03px;background:#d4d0c8;border-right:1px solid #505050;border-bottom:1px solid #505050;box-shadow:inset 1px 1px 0 #fff"></div>
<div class="a t" style="left:3.5px;top:319.17px;font-size:12px;line-height:12px;letter-spacing:0.2px;color:#333">24381</div>
<div class="a" style="left:48.0px;top:315.97px;width:104.0px;height:17.03px;background:#fde5d1;border-right:1px solid #e6d4c4;border-bottom:1px solid #e6d4c4"></div>
<div class="a t" style="left:51.5px;top:319.17px;font-size:12px;line-height:12px;letter-spacing:0.2px;color:#333">WS0963.05.17</div>
<div class="a" style="left:152.0px;top:315.97px;width:183.2px;height:17.03px;background:#fde5d1;border-right:1px solid #e6d4c4;border-bottom:1px solid #e6d4c4"></div>
<div class="a t" style="left:155.5px;top:319.17px;font-size:12px;line-height:12px;letter-spacing:0.2px;color:#333">5/9/2017 11:16:00 AM</div>
<div class="a" style="left:335.2px;top:315.97px;width:88.0px;height:17.03px;background:#fde5d1;border-right:1px solid #e6d4c4;border-bottom:1px solid #e6d4c4"></div>
<div class="a t" style="left:338.7px;top:319.17px;font-size:12px;line-height:12px;letter-spacing:0.2px;color:#333">2017-05-12</div>
<div class="a" style="left:423.2px;top:315.97px;width:63.30000000000001px;height:17.03px;background:#fde5d1;border-right:1px solid #e6d4c4;border-bottom:1px solid #e6d4c4"></div>
<div class="a t" style="left:426.7px;top:319.17px;font-size:12px;line-height:12px;letter-spacing:0.2px;color:#333">REGIONAL</div>
<div class="a" style="left:0.0px;top:332.60px;width:48.0px;height:17.03px;background:#d4d0c8;border-right:1px solid #505050;border-bottom:1px solid #505050;box-shadow:inset 1px 1px 0 #fff"></div>
<div class="a t" style="left:3.5px;top:335.80px;font-size:12px;line-height:12px;letter-spacing:0.2px;color:#333">24379</div>
<div class="a" style="left:48.0px;top:332.60px;width:104.0px;height:17.03px;background:#fde5d1;border-right:1px solid #e6d4c4;border-bottom:1px solid #e6d4c4"></div>
<div class="a t" style="left:51.5px;top:335.80px;font-size:12px;line-height:12px;letter-spacing:0.2px;color:#333">WS0961.05.17</div>
<div class="a" style="left:152.0px;top:332.60px;width:183.2px;height:17.03px;background:#fde5d1;border-right:1px solid #e6d4c4;border-bottom:1px solid #e6d4c4"></div>
<div class="a t" style="left:155.5px;top:335.80px;font-size:12px;line-height:12px;letter-spacing:0.2px;color:#333">5/8/2017 2:01:00 PM</div>
<div class="a" style="left:335.2px;top:332.60px;width:88.0px;height:17.03px;background:#fde5d1;border-right:1px solid #e6d4c4;border-bottom:1px solid #e6d4c4"></div>
<div class="a t" style="left:338.7px;top:335.80px;font-size:12px;line-height:12px;letter-spacing:0.2px;color:#333">2017-05-10</div>
<div class="a" style="left:423.2px;top:332.60px;width:63.30000000000001px;height:17.03px;background:#fde5d1;border-right:1px solid #e6d4c4;border-bottom:1px solid #e6d4c4"></div>
<div class="a t" style="left:426.7px;top:335.80px;font-size:12px;line-height:12px;letter-spacing:0.2px;color:#333">REGIONAL</div>
<div class="a" style="left:0.0px;top:349.23px;width:48.0px;height:17.03px;background:#d4d0c8;border-right:1px solid #505050;border-bottom:1px solid #505050;box-shadow:inset 1px 1px 0 #fff"></div>
<div class="a t" style="left:3.5px;top:352.43px;font-size:12px;line-height:12px;letter-spacing:0.2px;color:#333">24378</div>
<div class="a" style="left:48.0px;top:349.23px;width:104.0px;height:17.03px;background:#fde5d1;border-right:1px solid #e6d4c4;border-bottom:1px solid #e6d4c4"></div>
<div class="a t" style="left:51.5px;top:352.43px;font-size:12px;line-height:12px;letter-spacing:0.2px;color:#333">WS0960.05.17</div>
<div class="a" style="left:152.0px;top:349.23px;width:183.2px;height:17.03px;background:#fde5d1;border-right:1px solid #e6d4c4;border-bottom:1px solid #e6d4c4"></div>
<div class="a t" style="left:155.5px;top:352.43px;font-size:12px;line-height:12px;letter-spacing:0.2px;color:#333">5/8/2017 2:01:00 PM</div>
<div class="a" style="left:335.2px;top:349.23px;width:88.0px;height:17.03px;background:#fde5d1;border-right:1px solid #e6d4c4;border-bottom:1px solid #e6d4c4"></div>
<div class="a t" style="left:338.7px;top:352.43px;font-size:12px;line-height:12px;letter-spacing:0.2px;color:#333">2017-05-10</div>
<div class="a" style="left:423.2px;top:349.23px;width:63.30000000000001px;height:17.03px;background:#fde5d1;border-right:1px solid #e6d4c4;border-bottom:1px solid #e6d4c4"></div>
<div class="a t" style="left:426.7px;top:352.43px;font-size:12px;line-height:12px;letter-spacing:0.2px;color:#333">REGIONAL</div>
<div class="a" style="left:0.0px;top:365.86px;width:48.0px;height:17.03px;background:#d4d0c8;border-right:1px solid #505050;border-bottom:1px solid #505050;box-shadow:inset 1px 1px 0 #fff"></div>
<div class="a t" style="left:3.5px;top:369.06px;font-size:12px;line-height:12px;letter-spacing:0.2px;color:#333">24377</div>
<div class="a" style="left:48.0px;top:365.86px;width:104.0px;height:17.03px;background:#fde5d1;border-right:1px solid #e6d4c4;border-bottom:1px solid #e6d4c4"></div>
<div class="a t" style="left:51.5px;top:369.06px;font-size:12px;line-height:12px;letter-spacing:0.2px;color:#333">WS0959.05.17</div>
<div class="a" style="left:152.0px;top:365.86px;width:183.2px;height:17.03px;background:#fde5d1;border-right:1px solid #e6d4c4;border-bottom:1px solid #e6d4c4"></div>
<div class="a t" style="left:155.5px;top:369.06px;font-size:12px;line-height:12px;letter-spacing:0.2px;color:#333">5/8/2017 12:38:00 PM</div>
<div class="a" style="left:335.2px;top:365.86px;width:88.0px;height:17.03px;background:#fde5d1;border-right:1px solid #e6d4c4;border-bottom:1px solid #e6d4c4"></div>
<div class="a t" style="left:338.7px;top:369.06px;font-size:12px;line-height:12px;letter-spacing:0.2px;color:#333">2017-05-12</div>
<div class="a" style="left:423.2px;top:365.86px;width:63.30000000000001px;height:17.03px;background:#fde5d1;border-right:1px solid #e6d4c4;border-bottom:1px solid #e6d4c4"></div>
<div class="a t" style="left:426.7px;top:369.06px;font-size:12px;line-height:12px;letter-spacing:0.2px;color:#333">Braathens</div>
<div class="a" style="left:0.0px;top:382.49px;width:48.0px;height:17.03px;background:#d4d0c8;border-right:1px solid #505050;border-bottom:1px solid #505050;box-shadow:inset 1px 1px 0 #fff"></div>
<div class="a t" style="left:3.5px;top:385.69px;font-size:12px;line-height:12px;letter-spacing:0.2px;color:#333">24376</div>
<div class="a" style="left:48.0px;top:382.49px;width:104.0px;height:17.03px;background:#ffffff;border-right:1px solid #e4e0d8;border-bottom:1px solid #e4e0d8"></div>
<div class="a t" style="left:51.5px;top:385.69px;font-size:12px;line-height:12px;letter-spacing:0.2px;color:#333">WS0958.05.17</div>
<div class="a" style="left:152.0px;top:382.49px;width:183.2px;height:17.03px;background:#ffffff;border-right:1px solid #e4e0d8;border-bottom:1px solid #e4e0d8"></div>
<div class="a t" style="left:155.5px;top:385.69px;font-size:12px;line-height:12px;letter-spacing:0.2px;color:#333">5/8/2017 12:38:00 PM</div>
<div class="a" style="left:335.2px;top:382.49px;width:88.0px;height:17.03px;background:#ffffff;border-right:1px solid #e4e0d8;border-bottom:1px solid #e4e0d8"></div>
<div class="a t" style="left:338.7px;top:385.69px;font-size:12px;line-height:12px;letter-spacing:0.2px;color:#333">2017-05-12</div>
<div class="a" style="left:423.2px;top:382.49px;width:63.30000000000001px;height:17.03px;background:#ffffff;border-right:1px solid #e4e0d8;border-bottom:1px solid #e4e0d8"></div>
<div class="a t" style="left:426.7px;top:385.69px;font-size:12px;line-height:12px;letter-spacing:0.2px;color:#333">Braathens</div>
<div class="a" style="left:0.0px;top:399.12px;width:48.0px;height:17.03px;background:#d4d0c8;border-right:1px solid #505050;border-bottom:1px solid #505050;box-shadow:inset 1px 1px 0 #fff"></div>
<div class="a t" style="left:3.5px;top:402.32px;font-size:12px;line-height:12px;letter-spacing:0.2px;color:#333">24375</div>
<div class="a" style="left:48.0px;top:399.12px;width:104.0px;height:17.03px;background:#ffffff;border-right:1px solid #e4e0d8;border-bottom:1px solid #e4e0d8"></div>
<div class="a t" style="left:51.5px;top:402.32px;font-size:12px;line-height:12px;letter-spacing:0.2px;color:#333">WS0957.05.17</div>
<div class="a" style="left:152.0px;top:399.12px;width:183.2px;height:17.03px;background:#ffffff;border-right:1px solid #e4e0d8;border-bottom:1px solid #e4e0d8"></div>
<div class="a t" style="left:155.5px;top:402.32px;font-size:12px;line-height:12px;letter-spacing:0.2px;color:#333">5/8/2017 12:38:00 PM</div>
<div class="a" style="left:335.2px;top:399.12px;width:88.0px;height:17.03px;background:#ffffff;border-right:1px solid #e4e0d8;border-bottom:1px solid #e4e0d8"></div>
<div class="a t" style="left:338.7px;top:402.32px;font-size:12px;line-height:12px;letter-spacing:0.2px;color:#333">2017-05-12</div>
<div class="a" style="left:423.2px;top:399.12px;width:63.30000000000001px;height:17.03px;background:#ffffff;border-right:1px solid #e4e0d8;border-bottom:1px solid #e4e0d8"></div>
<div class="a t" style="left:426.7px;top:402.32px;font-size:12px;line-height:12px;letter-spacing:0.2px;color:#333">Braathens</div>
<div class="a" style="left:0.0px;top:415.75px;width:48.0px;height:17.03px;background:#d4d0c8;border-right:1px solid #505050;border-bottom:1px solid #505050;box-shadow:inset 1px 1px 0 #fff"></div>
<div class="a t" style="left:3.5px;top:418.95px;font-size:12px;line-height:12px;letter-spacing:0.2px;color:#333">24374</div>
<div class="a" style="left:48.0px;top:415.75px;width:104.0px;height:17.03px;background:#fde5d1;border-right:1px solid #e6d4c4;border-bottom:1px solid #e6d4c4"></div>
<div class="a t" style="left:51.5px;top:418.95px;font-size:12px;line-height:12px;letter-spacing:0.2px;color:#333">WS0956.05.17</div>
<div class="a" style="left:152.0px;top:415.75px;width:183.2px;height:17.03px;background:#fde5d1;border-right:1px solid #e6d4c4;border-bottom:1px solid #e6d4c4"></div>
<div class="a t" style="left:155.5px;top:418.95px;font-size:12px;line-height:12px;letter-spacing:0.2px;color:#333">5/8/2017 12:38:00 PM</div>
<div class="a" style="left:335.2px;top:415.75px;width:88.0px;height:17.03px;background:#fde5d1;border-right:1px solid #e6d4c4;border-bottom:1px solid #e6d4c4"></div>
<div class="a t" style="left:338.7px;top:418.95px;font-size:12px;line-height:12px;letter-spacing:0.2px;color:#333">2017-05-12</div>
<div class="a" style="left:423.2px;top:415.75px;width:63.30000000000001px;height:17.03px;background:#fde5d1;border-right:1px solid #e6d4c4;border-bottom:1px solid #e6d4c4"></div>
<div class="a t" style="left:426.7px;top:418.95px;font-size:12px;line-height:12px;letter-spacing:0.2px;color:#333">Braathens</div>
<div class="a" style="left:0.0px;top:432.38px;width:48.0px;height:17.03px;background:#d4d0c8;border-right:1px solid #505050;border-bottom:1px solid #505050;box-shadow:inset 1px 1px 0 #fff"></div>
<div class="a t" style="left:3.5px;top:435.58px;font-size:12px;line-height:12px;letter-spacing:0.2px;color:#333">24373</div>
<div class="a" style="left:48.0px;top:432.38px;width:104.0px;height:17.03px;background:#fde5d1;border-right:1px solid #e6d4c4;border-bottom:1px solid #e6d4c4"></div>
<div class="a t" style="left:51.5px;top:435.58px;font-size:12px;line-height:12px;letter-spacing:0.2px;color:#333">WS0955.05.17</div>
<div class="a" style="left:152.0px;top:432.38px;width:183.2px;height:17.03px;background:#fde5d1;border-right:1px solid #e6d4c4;border-bottom:1px solid #e6d4c4"></div>
<div class="a t" style="left:155.5px;top:435.58px;font-size:12px;line-height:12px;letter-spacing:0.2px;color:#333">5/8/2017 12:38:00 PM</div>
<div class="a" style="left:335.2px;top:432.38px;width:88.0px;height:17.03px;background:#fde5d1;border-right:1px solid #e6d4c4;border-bottom:1px solid #e6d4c4"></div>
<div class="a t" style="left:338.7px;top:435.58px;font-size:12px;line-height:12px;letter-spacing:0.2px;color:#333">2017-05-12</div>
<div class="a" style="left:423.2px;top:432.38px;width:63.30000000000001px;height:17.03px;background:#fde5d1;border-right:1px solid #e6d4c4;border-bottom:1px solid #e6d4c4"></div>
<div class="a t" style="left:426.7px;top:435.58px;font-size:12px;line-height:12px;letter-spacing:0.2px;color:#333">Braathens</div>
<div class="a" style="left:0.0px;top:449.01px;width:48.0px;height:17.03px;background:#d4d0c8;border-right:1px solid #505050;border-bottom:1px solid #505050;box-shadow:inset 1px 1px 0 #fff"></div>
<div class="a t" style="left:3.5px;top:452.21px;font-size:12px;line-height:12px;letter-spacing:0.2px;color:#333">24372</div>
<div class="a" style="left:48.0px;top:449.01px;width:104.0px;height:17.03px;background:#fde5d1;border-right:1px solid #e6d4c4;border-bottom:1px solid #e6d4c4"></div>
<div class="a t" style="left:51.5px;top:452.21px;font-size:12px;line-height:12px;letter-spacing:0.2px;color:#333">WS0954.05.17</div>
<div class="a" style="left:152.0px;top:449.01px;width:183.2px;height:17.03px;background:#fde5d1;border-right:1px solid #e6d4c4;border-bottom:1px solid #e6d4c4"></div>
<div class="a t" style="left:155.5px;top:452.21px;font-size:12px;line-height:12px;letter-spacing:0.2px;color:#333">5/8/2017 12:38:00 PM</div>
<div class="a" style="left:335.2px;top:449.01px;width:88.0px;height:17.03px;background:#fde5d1;border-right:1px solid #e6d4c4;border-bottom:1px solid #e6d4c4"></div>
<div class="a t" style="left:338.7px;top:452.21px;font-size:12px;line-height:12px;letter-spacing:0.2px;color:#333">2017-05-12</div>
<div class="a" style="left:423.2px;top:449.01px;width:63.30000000000001px;height:17.03px;background:#fde5d1;border-right:1px solid #e6d4c4;border-bottom:1px solid #e6d4c4"></div>
<div class="a t" style="left:426.7px;top:452.21px;font-size:12px;line-height:12px;letter-spacing:0.2px;color:#333">Braathens</div>
<div class="a" style="left:0.0px;top:465.64px;width:48.0px;height:17.03px;background:#d4d0c8;border-right:1px solid #505050;border-bottom:1px solid #505050;box-shadow:inset 1px 1px 0 #fff"></div>
<div class="a t" style="left:3.5px;top:468.84px;font-size:12px;line-height:12px;letter-spacing:0.2px;color:#333">24371</div>
<div class="a" style="left:48.0px;top:465.64px;width:104.0px;height:17.03px;background:#fde5d1;border-right:1px solid #e6d4c4;border-bottom:1px solid #e6d4c4"></div>
<div class="a t" style="left:51.5px;top:468.84px;font-size:12px;line-height:12px;letter-spacing:0.2px;color:#333">WS0953.05.17</div>
<div class="a" style="left:152.0px;top:465.64px;width:183.2px;height:17.03px;background:#fde5d1;border-right:1px solid #e6d4c4;border-bottom:1px solid #e6d4c4"></div>
<div class="a t" style="left:155.5px;top:468.84px;font-size:12px;line-height:12px;letter-spacing:0.2px;color:#333">5/8/2017 12:38:00 PM</div>
<div class="a" style="left:335.2px;top:465.64px;width:88.0px;height:17.03px;background:#fde5d1;border-right:1px solid #e6d4c4;border-bottom:1px solid #e6d4c4"></div>
<div class="a t" style="left:338.7px;top:468.84px;font-size:12px;line-height:12px;letter-spacing:0.2px;color:#333">2017-05-12</div>
<div class="a" style="left:423.2px;top:465.64px;width:63.30000000000001px;height:17.03px;background:#fde5d1;border-right:1px solid #e6d4c4;border-bottom:1px solid #e6d4c4"></div>
<div class="a t" style="left:426.7px;top:468.84px;font-size:12px;line-height:12px;letter-spacing:0.2px;color:#333">Braathens</div>
<div class="a" style="left:0.0px;top:482.27px;width:48.0px;height:17.03px;background:#d4d0c8;border-right:1px solid #505050;border-bottom:1px solid #505050;box-shadow:inset 1px 1px 0 #fff"></div>
<div class="a t" style="left:3.5px;top:485.47px;font-size:12px;line-height:12px;letter-spacing:0.2px;color:#333">24369</div>
<div class="a" style="left:48.0px;top:482.27px;width:104.0px;height:17.03px;background:#fde5d1;border-right:1px solid #e6d4c4;border-bottom:1px solid #e6d4c4"></div>
<div class="a t" style="left:51.5px;top:485.47px;font-size:12px;line-height:12px;letter-spacing:0.2px;color:#333">WS0951.05.17</div>
<div class="a" style="left:152.0px;top:482.27px;width:183.2px;height:17.03px;background:#fde5d1;border-right:1px solid #e6d4c4;border-bottom:1px solid #e6d4c4"></div>
<div class="a t" style="left:155.5px;top:485.47px;font-size:12px;line-height:12px;letter-spacing:0.2px;color:#333">5/8/2017 12:38:00 PM</div>
<div class="a" style="left:335.2px;top:482.27px;width:88.0px;height:17.03px;background:#fde5d1;border-right:1px solid #e6d4c4;border-bottom:1px solid #e6d4c4"></div>
<div class="a t" style="left:338.7px;top:485.47px;font-size:12px;line-height:12px;letter-spacing:0.2px;color:#333">2017-05-12</div>
<div class="a" style="left:423.2px;top:482.27px;width:63.30000000000001px;height:17.03px;background:#fde5d1;border-right:1px solid #e6d4c4;border-bottom:1px solid #e6d4c4"></div>
<div class="a t" style="left:426.7px;top:485.47px;font-size:12px;line-height:12px;letter-spacing:0.2px;color:#333">Braathens</div>
<div class="a" style="left:0.0px;top:498.90px;width:48.0px;height:17.03px;background:#d4d0c8;border-right:1px solid #505050;border-bottom:1px solid #505050;box-shadow:inset 1px 1px 0 #fff"></div>
<div class="a t" style="left:3.5px;top:502.10px;font-size:12px;line-height:12px;letter-spacing:0.2px;color:#333">24368</div>
<div class="a" style="left:48.0px;top:498.90px;width:104.0px;height:17.03px;background:#fde5d1;border-right:1px solid #e6d4c4;border-bottom:1px solid #e6d4c4"></div>
<div class="a t" style="left:51.5px;top:502.10px;font-size:12px;line-height:12px;letter-spacing:0.2px;color:#333">WS0950.05.17</div>
<div class="a" style="left:152.0px;top:498.90px;width:183.2px;height:17.03px;background:#fde5d1;border-right:1px solid #e6d4c4;border-bottom:1px solid #e6d4c4"></div>
<div class="a t" style="left:155.5px;top:502.10px;font-size:12px;line-height:12px;letter-spacing:0.2px;color:#333">5/8/2017 12:38:00 PM</div>
<div class="a" style="left:335.2px;top:498.90px;width:88.0px;height:17.03px;background:#fde5d1;border-right:1px solid #e6d4c4;border-bottom:1px solid #e6d4c4"></div>
<div class="a t" style="left:338.7px;top:502.10px;font-size:12px;line-height:12px;letter-spacing:0.2px;color:#333">2017-05-12</div>
<div class="a" style="left:423.2px;top:498.90px;width:63.30000000000001px;height:17.03px;background:#fde5d1;border-right:1px solid #e6d4c4;border-bottom:1px solid #e6d4c4"></div>
<div class="a t" style="left:426.7px;top:502.10px;font-size:12px;line-height:12px;letter-spacing:0.2px;color:#333">Braathens</div>
</div>
<div class="a " style="left:518px;top:142px;width:14px;height:518px;background:#ecebe6"></div>
<div class="a btn" style="left:518px;top:142px;width:14px;height:14px;"></div>
<svg class="a" style="left:521px;top:146px" width="8" height="5" viewBox="0 0 8 5"><path d="M0.5 4.5 H7.5 L4 0.5 Z" fill="#000"/></svg>
<div class="a btn" style="left:518px;top:156px;width:14px;height:13px;"></div>
<div class="a btn" style="left:518px;top:646px;width:14px;height:14px;"></div>
<svg class="a" style="left:521px;top:651px" width="8" height="5" viewBox="0 0 8 5"><path d="M0.5 0.5 H7.5 L4 4.5 Z" fill="#000"/></svg>
<div class="a " style="left:31px;top:660px;width:473px;height:14px;background:#ecebe6"></div>
<div class="a btn" style="left:31px;top:660px;width:14px;height:14px;"></div>
<svg class="a" style="left:35px;top:663px" width="5" height="8" viewBox="0 0 5 8"><path d="M4.5 0.5 V7.5 L0.5 4 Z" fill="#000"/></svg>
<div class="a btn" style="left:45px;top:660px;width:14px;height:14px;"></div>
<div class="a btn" style="left:504px;top:660px;width:14px;height:14px;"></div>
<svg class="a" style="left:509px;top:663px" width="5" height="8" viewBox="0 0 5 8"><path d="M0.5 0.5 V7.5 L4.5 4 Z" fill="#000"/></svg>
<div class="a " style="left:518px;top:660px;width:14px;height:14px;background:#d4d0c8"></div>
<div class="a " style="left:29px;top:678.5px;width:174px;height:13px;border:1px solid;border-color:#9a9893 #fff #fff #9a9893"></div>
<div class="a t" style="left:33px;top:681.56px;font-size:8.2px;line-height:8.2px;text-align:left;white-space:nowrap;color:#222">Found 199 Work Orders</div>
<div class="a gb" style="left:547px;top:87px;width:840px;height:629px;"></div>
<div class="a " style="left:552px;top:76px;width:160px;height:14px;background:#d4d0c8"></div>
<div class="a t" style="left:555px;top:77.98px;font-size:16.8px;line-height:16.8px;text-align:left;white-space:nowrap;font-weight:bold;color:#0a0a80;-webkit-text-stroke:0.3px #0a0a80">Service WO Editor:</div>
<div class="a " style="left:552px;top:96.8px;width:519px;height:20.5px;border:1px solid;border-color:#fff #9a9893 #9a9893 #fff"></div>
<div class="a " style="left:555.5px;top:100px;width:1px;height:14px;background:#a8a6a0;box-shadow:1px 0 0 #fff"></div>
<div class="a " style="left:618.5px;top:100px;width:1px;height:14px;background:#a8a6a0;box-shadow:1px 0 0 #fff"></div>
<div class="a " style="left:683px;top:100px;width:1px;height:14px;background:#a8a6a0;box-shadow:1px 0 0 #fff"></div>
<div class="a " style="left:746px;top:100px;width:1px;height:14px;background:#a8a6a0;box-shadow:1px 0 0 #fff"></div>
<div class="a " style="left:810px;top:100px;width:1px;height:14px;background:#a8a6a0;box-shadow:1px 0 0 #fff"></div>
<div class="a " style="left:873.5px;top:100px;width:1px;height:14px;background:#a8a6a0;box-shadow:1px 0 0 #fff"></div>
<div class="a " style="left:938px;top:100px;width:1px;height:14px;background:#a8a6a0;box-shadow:1px 0 0 #fff"></div>
<div class="a " style="left:1002px;top:100px;width:1px;height:14px;background:#a8a6a0;box-shadow:1px 0 0 #fff"></div>
<div class="a t" style="left:580px;top:103.46px;font-size:9.5px;line-height:9.5px;text-align:left;white-space:nowrap;color:#1e1e1e">Refresh</div>
<svg class="a" style="left:564.5px;top:99px" width="16" height="16" viewBox="0 0 16 16"><path d="M3 5 H10 q3 0 3 3 q0 3 -3 3 H6" stroke="#108010" stroke-width="2.4" fill="none"/><path d="M1 5 L5 2 L5 8 Z" fill="#108010"/></svg>
<div class="a t" style="left:662px;top:103.46px;font-size:9.5px;line-height:9.5px;text-align:left;white-space:nowrap;color:#1e1e1e">Add</div>
<svg class="a" style="left:627px;top:99px" width="16" height="16" viewBox="0 0 16 16"><rect x="4" y="3" width="8" height="10" fill="#40d0e0" stroke="#205060"/><path d="M2 2 L4 4 M14 2 L12 4 M2 14 L4 12 M14 14 L12 12 M8 0 V2" stroke="#303030"/></svg>
<div class="a t" style="left:710px;top:103.46px;font-size:9.5px;line-height:9.5px;text-align:left;white-space:nowrap;color:#1e1e1e">Update</div>
<svg class="a" style="left:690px;top:99px" width="16" height="16" viewBox="0 0 16 16"><rect x="2" y="2" width="5" height="5" fill="#2040c0"/><rect x="3" y="3" width="3" height="3" fill="#fff"/><path d="M8 4 H12 V9" stroke="#000" stroke-width="1.5" fill="none"/><rect x="6" y="9" width="8" height="5" fill="#fff" stroke="#000"/><rect x="7" y="11" width="3" height="2" fill="#d02020"/></svg>
<div class="a t" style="left:777px;top:103.46px;font-size:9.5px;line-height:9.5px;text-align:left;white-space:nowrap;color:#1e1e1e">Delete</div>
<svg class="a" style="left:754px;top:99px" width="16" height="16" viewBox="0 0 16 16"><rect x="6" y="0.8" width="4" height="1.6" fill="#202020"/><rect x="2.5" y="2.2" width="11" height="2.2" fill="#303030"/><path d="M3.5 4.5 H12.5 L12 15 H4 Z" fill="#3a3a3a"/><path d="M5.3 5.5 V14 M7.3 5.5 V14 M9.2 5.5 V14 M11 5.5 V14" stroke="#b8b8b8" stroke-width="0.9"/></svg>
<div class="a t" style="left:838px;top:103.46px;font-size:9.5px;line-height:9.5px;text-align:left;white-space:nowrap;color:#1e1e1e">Comply</div>
<svg class="a" style="left:817px;top:99px" width="16" height="16" viewBox="0 0 16 16"><path d="M2 8 L6 13 L14 2" stroke="#d01818" stroke-width="2.8" fill="none" stroke-linecap="round"/></svg>
<div class="a t" style="left:900.5px;top:103.46px;font-size:9.5px;line-height:9.5px;text-align:left;white-space:nowrap;color:#1e1e1e">Set INT</div>
<svg class="a" style="left:881px;top:99px" width="16" height="16" viewBox="0 0 16 16"><rect x="4" y="3" width="11" height="10" fill="#fff" stroke="#102080" stroke-width="1.4"/><path d="M7 6 H13 M7 8 H13 M7 10 H13" stroke="#102080"/><path d="M1 8 H7 M4 5 L7 8 L4 11" stroke="#2040d0" stroke-width="1.8" fill="none"/></svg>
<div class="a t" style="left:984px;top:103.46px;font-size:9.5px;line-height:9.5px;text-align:left;white-space:nowrap;color:#1e1e1e">PO</div>
<svg class="a" style="left:945px;top:99px" width="16" height="16" viewBox="0 0 16 16"><path d="M1 2 L11 4 L11 9 L1 7 Z" fill="#e8c870" stroke="#8a7030" stroke-width="0.8"/><path d="M3 5.5 L13 7.5 L13 12 L3 10 Z" fill="#a8c878" stroke="#607830" stroke-width="0.8"/><path d="M5 9 L15 11 L15 15.5 L5 13.5 Z" fill="#e8a878" stroke="#906040" stroke-width="0.8"/><path d="M15 10 V16" stroke="#202020" stroke-width="1.2"/></svg>
<div class="a t" style="left:1117px;top:94.07px;font-size:13.5px;line-height:13.5px;text-align:left;white-space:nowrap;color:#3c3c3c">Group:</div>
<div class="a t" style="left:1163px;top:92.84px;font-size:12px;line-height:12px;text-align:left;white-space:nowrap;color:#e02020">*</div>
<div class="a cb" style="left:1074px;top:108px;width:140px;height:22px;"></div>
<div class="a btn" style="left:1197px;top:110px;width:15px;height:18px;"></div>
<svg class="a" style="left:1200.5px;top:117.0px" width="8" height="5" viewBox="0 0 8 5"><path d="M0.5 0.5 H7.5 L4 4.5 Z" fill="#000"/></svg>
<div class="a t" style="left:1077px;top:112.15px;font-size:14px;line-height:14px;text-align:left;white-space:nowrap;color:#1010b0;font-weight:bold">Base</div>
<div class="a tb" style="left:1218px;top:102px;width:156px;height:32px;"></div>
<div class="a t" style="left:1218px;top:105.37px;font-size:20px;line-height:20px;text-align:center;width:156px;color:#1010b0;font-weight:bold">WS0002.08.20</div>
<div class="a t" style="left:579.5px;top:138.27px;font-size:13.5px;line-height:13.5px;text-align:left;white-space:nowrap;color:#3c3c3c">WO Date:</div>
<div class="a t" style="left:658px;top:138.84px;font-size:12px;line-height:12px;text-align:left;white-space:nowrap;color:#e02020">*</div>
<div class="a tb" style="left:560px;top:152px;width:113px;height:26px;"></div>
<div class="a tb" style="left:672px;top:152px;width:72px;height:26px;"></div>
<div class="a t" style="left:560px;top:155.15px;font-size:14px;line-height:14px;text-align:center;width:113px;color:#1010b0;font-weight:bold">27.08.20</div>
<div class="a t" style="left:672px;top:155.15px;font-size:14px;line-height:14px;text-align:center;width:72px;color:#1010b0;font-weight:bold">17:26</div>
<div class="a lav" style="left:672px;top:129px;width:44px;height:24px;"></div>
<svg class="a" style="left:686px;top:133px" width="16" height="15" viewBox="0 0 16 15"><rect x="1" y="1" width="14" height="13" fill="#fff" stroke="#202020"/><rect x="1" y="1" width="14" height="3" fill="#2030a0"/><path d="M1 6.5 H15 M1 9 H15 M1 11.5 H15 M4.5 4 V14 M8 4 V14 M11.5 4 V14" stroke="#b03030" stroke-width="0.8"/></svg>
<div class="a t" style="left:894px;top:138.27px;font-size:13.5px;line-height:13.5px;text-align:left;white-space:nowrap;color:#3c3c3c">Customer:</div>
<div class="a t" style="left:966px;top:138.84px;font-size:12px;line-height:12px;text-align:left;white-space:nowrap;color:#e02020">*</div>
<div class="a cb" style="left:749.5px;top:152.5px;width:364px;height:22px;"></div>
<div class="a btn" style="left:1096.5px;top:154.5px;width:15px;height:18px;"></div>
<svg class="a" style="left:1100.0px;top:161.5px" width="8" height="5" viewBox="0 0 8 5"><path d="M0.5 0.5 H7.5 L4 4.5 Z" fill="#000"/></svg>
<div class="a t" style="left:752.5px;top:155.65px;font-size:14px;line-height:14px;text-align:left;white-space:nowrap;color:#1010b0;font-weight:bold">Air Astana JSC</div>
<div class="a t" style="left:1163.5px;top:138.07px;font-size:13.5px;line-height:13.5px;text-align:left;white-space:nowrap;color:#3c3c3c">Customer Order Reference:</div>
<div class="a t" style="left:1357px;top:138.84px;font-size:12px;line-height:12px;text-align:left;white-space:nowrap;color:#e02020">*</div>
<div class="a tb" style="left:1120px;top:152.5px;width:254px;height:25px;"></div>
<div class="a t" style="left:1120px;top:154.57px;font-size:13.5px;line-height:13.5px;text-align:center;width:254px;color:#1010b0;font-weight:bold">TEST NG</div>
<div class="a t" style="left:655px;top:182.27px;font-size:13.5px;line-height:13.5px;text-align:left;white-space:nowrap;color:#3c3c3c">PN:</div>
<div class="a t" style="left:700px;top:182.84px;font-size:12px;line-height:12px;text-align:left;white-space:nowrap;color:#e02020">*</div>
<div class="a tb" style="left:749.5px;top:178px;width:153px;height:20px;"></div>
<div class="a cb" style="left:560.5px;top:197.5px;width:224px;height:22px;"></div>
<div class="a btn" style="left:767.5px;top:199.5px;width:15px;height:18px;"></div>
<svg class="a" style="left:771.0px;top:206.5px" width="8" height="5" viewBox="0 0 8 5"><path d="M0.5 0.5 H7.5 L4 4.5 Z" fill="#000"/></svg>
<div class="a t" style="left:563.5px;top:201.15px;font-size:14px;line-height:14px;text-align:left;white-space:nowrap;color:#1010b0;font-weight:bold">000021XX</div>
<div class="a t" style="left:909.5px;top:182.17px;font-size:13.5px;line-height:13.5px;text-align:left;white-space:nowrap;color:#3c3c3c">SN:</div>
<div class="a tb" style="left:794px;top:197.5px;width:254px;height:24px;"></div>
<div class="a t" style="left:794px;top:200.07px;font-size:13.5px;line-height:13.5px;text-align:center;width:254px;color:#1010b0;font-weight:bold">sdfsa</div>
<div class="a t" style="left:1077px;top:182.07px;font-size:13.5px;line-height:13.5px;text-align:left;white-space:nowrap;color:#3c3c3c">A/C Type:</div>
<div class="a cb" style="left:1050.5px;top:197.5px;width:126px;height:23px;"></div>
<div class="a btn" style="left:1159.5px;top:199.5px;width:15px;height:19px;"></div>
<svg class="a" style="left:1163.0px;top:207.0px" width="8" height="5" viewBox="0 0 8 5"><path d="M0.5 0.5 H7.5 L4 4.5 Z" fill="#000"/></svg>
<div class="a t" style="left:734.5px;top:224.97px;font-size:13.5px;line-height:13.5px;text-align:left;white-space:nowrap;color:#3c3c3c">Description:</div>
<div class="a t" style="left:840px;top:225.84px;font-size:12px;line-height:12px;text-align:left;white-space:nowrap;color:#e02020">*</div>
<div class="a tb" style="left:560.5px;top:240.5px;width:421px;height:26px;"></div>
<div class="a t" style="left:563px;top:244.15px;font-size:14px;line-height:14px;text-align:left;white-space:nowrap;color:#1010b0;font-weight:bold">LIFEJACKET TYPE 102 Mk. 2BA</div>
<div class="a t" style="left:1034px;top:224.97px;font-size:13.5px;line-height:13.5px;text-align:left;white-space:nowrap;color:#3c3c3c">Contract Type:</div>
<div class="a t" style="left:1148px;top:225.84px;font-size:12px;line-height:12px;text-align:left;white-space:nowrap;color:#e02020">*</div>
<div class="a cb" style="left:986.5px;top:241px;width:183px;height:22px;"></div>
<div class="a btn" style="left:1152.5px;top:243px;width:15px;height:18px;"></div>
<svg class="a" style="left:1156.0px;top:250.0px" width="8" height="5" viewBox="0 0 8 5"><path d="M0.5 0.5 H7.5 L4 4.5 Z" fill="#000"/></svg>
<div class="a t" style="left:989.5px;top:245.15px;font-size:14px;line-height:14px;text-align:left;white-space:nowrap;color:#1010b0;font-weight:bold">NA</div>
<div class="a t" style="left:1192.5px;top:224.97px;font-size:13.5px;line-height:13.5px;text-align:left;white-space:nowrap;color:#3c3c3c">A/C Reg:</div>
<div class="a t" style="left:1260px;top:225.84px;font-size:12px;line-height:12px;text-align:left;white-space:nowrap;color:#e02020">*</div>
<div class="a cb" style="left:1176px;top:241px;width:98px;height:22px;"></div>
<div class="a btn" style="left:1257px;top:243px;width:15px;height:18px;"></div>
<svg class="a" style="left:1260.5px;top:250.0px" width="8" height="5" viewBox="0 0 8 5"><path d="M0.5 0.5 H7.5 L4 4.5 Z" fill="#000"/></svg>
<div class="a t" style="left:1179px;top:245.15px;font-size:14px;line-height:14px;text-align:left;white-space:nowrap;color:#1010b0;font-weight:bold">LY-STG</div>
<div class="a t" style="left:1292px;top:224.97px;font-size:13.5px;line-height:13.5px;text-align:left;white-space:nowrap;color:#3c3c3c">Treatment:</div>
<div class="a t" style="left:1368px;top:225.84px;font-size:12px;line-height:12px;text-align:left;white-space:nowrap;color:#e02020">*</div>
<div class="a cb" style="left:1288.5px;top:241px;width:84px;height:22px;"></div>
<div class="a btn" style="left:1355.5px;top:243px;width:15px;height:18px;"></div>
<svg class="a" style="left:1359.0px;top:250.0px" width="8" height="5" viewBox="0 0 8 5"><path d="M0.5 0.5 H7.5 L4 4.5 Z" fill="#000"/></svg>
<div class="a t" style="left:1291.5px;top:245.15px;font-size:14px;line-height:14px;text-align:left;white-space:nowrap;color:#1010b0;font-weight:bold">BMT</div>
<div class="a gb" style="left:560.5px;top:284px;width:322px;height:75px;"></div>
<div class="a " style="left:566px;top:276px;width:42px;height:14px;background:#d4d0c8"></div>
<div class="a t" style="left:569px;top:276.65px;font-size:14px;line-height:14px;text-align:left;white-space:nowrap;font-weight:bold;color:#111">Time:</div>
<div class="a t" style="left:582px;top:298.27px;font-size:13.5px;line-height:13.5px;text-align:left;white-space:nowrap;color:#3c3c3c">TSO :</div>
<div class="a t" style="left:580.5px;top:330.07px;font-size:13.5px;line-height:13.5px;text-align:left;white-space:nowrap;color:#3c3c3c">CSO :</div>
<div class="a t" style="left:736px;top:298.27px;font-size:13.5px;line-height:13.5px;text-align:left;white-space:nowrap;color:#3c3c3c">TSN :</div>
<div class="a t" style="left:739.5px;top:330.07px;font-size:13.5px;line-height:13.5px;text-align:left;white-space:nowrap;color:#3c3c3c">CSN :</div>
<div class="a tb" style="left:630px;top:296.5px;width:86px;height:25px;"></div>
<div class="a t" style="left:630px;top:301.07px;font-size:13.5px;line-height:13.5px;text-align:center;width:86px;color:#1010b0;font-weight:bold">NA</div>
<div class="a tb" style="left:630px;top:328px;width:86px;height:25px;"></div>
<div class="a t" style="left:630px;top:332.57px;font-size:13.5px;line-height:13.5px;text-align:center;width:86px;color:#1010b0;font-weight:bold">NA</div>
<div class="a tb" style="left:784px;top:296.5px;width:86px;height:25px;"></div>
<div class="a t" style="left:784px;top:301.07px;font-size:13.5px;line-height:13.5px;text-align:center;width:86px;color:#1010b0;font-weight:bold">NA</div>
<div class="a tb" style="left:784px;top:328px;width:86px;height:25px;"></div>
<div class="a t" style="left:784px;top:332.57px;font-size:13.5px;line-height:13.5px;text-align:center;width:86px;color:#1010b0;font-weight:bold">NA</div>
<div class="a gb" style="left:883px;top:284px;width:489px;height:75px;"></div>
<div class="a " style="left:888px;top:276px;width:143px;height:14px;background:#d4d0c8"></div>
<div class="a " style="left:1075px;top:278px;width:19px;height:12px;background:#d4d0c8"></div>
<div class="a t" style="left:890.5px;top:276.65px;font-size:14px;line-height:14px;text-align:left;white-space:nowrap;font-weight:bold;color:#111">Reason for Removal:</div>
<div class="a t" style="left:1078px;top:277.84px;font-size:12px;line-height:12px;text-align:left;white-space:nowrap;color:#e02020">*</div>
<div class="a tb" style="left:896.5px;top:296.5px;width:449px;height:58px;"></div>
<div class="a " style="left:1344.5px;top:296.5px;width:14px;height:58px;background:#ecebe6"></div>
<div class="a btn" style="left:1344.5px;top:296.5px;width:14px;height:13px;"></div>
<svg class="a" style="left:1347.5px;top:300.5px" width="8" height="5" viewBox="0 0 8 5"><path d="M0.5 4.5 H7.5 L4 0.5 Z" fill="#808080"/></svg>
<div class="a btn" style="left:1344.5px;top:341.5px;width:14px;height:13px;"></div>
<svg class="a" style="left:1347.5px;top:345.5px" width="8" height="5" viewBox="0 0 8 5"><path d="M0.5 0.5 H7.5 L4 4.5 Z" fill="#808080"/></svg>
<div class="a t" style="left:898.5px;top:300.07px;font-size:13.5px;line-height:13.5px;text-align:left;white-space:nowrap;color:#1010b0;font-weight:bold">fafsafsa</div>
<div class="a gb" style="left:560.5px;top:368px;width:686px;height:76px;"></div>
<div class="a " style="left:566px;top:360px;width:118px;height:14px;background:#d4d0c8"></div>
<div class="a " style="left:724px;top:362px;width:20px;height:12px;background:#d4d0c8"></div>
<div class="a t" style="left:568.5px;top:361.15px;font-size:14px;line-height:14px;text-align:left;white-space:nowrap;font-weight:bold;color:#111">Requested Work:</div>
<div class="a t" style="left:728px;top:362.84px;font-size:12px;line-height:12px;text-align:left;white-space:nowrap;color:#e02020">*</div>
<div class="a tb" style="left:574.5px;top:381px;width:646px;height:58px;"></div>
<div class="a " style="left:1219.5px;top:381px;width:14px;height:58px;background:#ecebe6"></div>
<div class="a btn" style="left:1219.5px;top:381px;width:14px;height:13px;"></div>
<svg class="a" style="left:1222.5px;top:385px" width="8" height="5" viewBox="0 0 8 5"><path d="M0.5 4.5 H7.5 L4 0.5 Z" fill="#808080"/></svg>
<div class="a btn" style="left:1219.5px;top:426px;width:14px;height:13px;"></div>
<svg class="a" style="left:1222.5px;top:430px" width="8" height="5" viewBox="0 0 8 5"><path d="M0.5 0.5 H7.5 L4 4.5 Z" fill="#808080"/></svg>
<div class="a t" style="left:576.5px;top:384.57px;font-size:13.5px;line-height:13.5px;text-align:left;white-space:nowrap;color:#1010b0;font-weight:bold">sfsafsaf</div>
<div class="a chk" style="left:1260px;top:368.5px;width:11px;height:11px;"></div>
<div class="a t" style="left:1277px;top:368.42px;font-size:12.5px;line-height:12.5px;text-align:left;white-space:nowrap;color:#333">Received</div>
<div class="a chk" style="left:1260px;top:385.95px;width:11px;height:11px;"></div>
<div class="a t" style="left:1277px;top:385.87px;font-size:12.5px;line-height:12.5px;text-align:left;white-space:nowrap;color:#333">Disassembly</div>
<div class="a chk" style="left:1260px;top:403.4px;width:11px;height:11px;"></div>
<div class="a t" style="left:1277px;top:403.32px;font-size:12.5px;line-height:12.5px;text-align:left;white-space:nowrap;color:#333">Cleaning</div>
<div class="a chk" style="left:1260px;top:420.85px;width:11px;height:11px;"></div>
<div class="a t" style="left:1277px;top:420.77px;font-size:12.5px;line-height:12.5px;text-align:left;white-space:nowrap;color:#333">Paint Removal</div>
<div class="a chk" style="left:1260px;top:438.3px;width:11px;height:11px;"></div>
<div class="a t" style="left:1277px;top:438.22px;font-size:12.5px;line-height:12.5px;text-align:left;white-space:nowrap;color:#333">Inspection</div>
<div class="a chk" style="left:1260px;top:455.75px;width:11px;height:11px;"></div>
<div class="a t" style="left:1277px;top:455.67px;font-size:12.5px;line-height:12.5px;text-align:left;white-space:nowrap;color:#333">NDT</div>
<div class="a chk" style="left:1260px;top:473.2px;width:11px;height:11px;"></div>
<div class="a t" style="left:1277px;top:473.12px;font-size:12.5px;line-height:12.5px;text-align:left;white-space:nowrap;color:#333">Repair</div>
<div class="a chk" style="left:1260px;top:490.65px;width:11px;height:11px;"></div>
<div class="a t" style="left:1277px;top:490.57px;font-size:12.5px;line-height:12.5px;text-align:left;white-space:nowrap;color:#333">Painting</div>
<div class="a chk" style="left:1260px;top:508.1px;width:11px;height:11px;"></div>
<div class="a t" style="left:1277px;top:508.02px;font-size:12.5px;line-height:12.5px;text-align:left;white-space:nowrap;color:#333">Assembly</div>
<div class="a t" style="left:568px;top:444.15px;font-size:14px;line-height:14px;text-align:left;white-space:nowrap;font-weight:bold;color:#111">Note:</div>
<div class="a tb" style="left:560.5px;top:457.5px;width:674px;height:47px;"></div>
<div class="a " style="left:1233.5px;top:457.5px;width:14px;height:47px;background:#ecebe6"></div>
<div class="a btn" style="left:1233.5px;top:457.5px;width:14px;height:13px;"></div>
<svg class="a" style="left:1236.5px;top:461.5px" width="8" height="5" viewBox="0 0 8 5"><path d="M0.5 4.5 H7.5 L4 0.5 Z" fill="#808080"/></svg>
<div class="a btn" style="left:1233.5px;top:491.5px;width:14px;height:13px;"></div>
<svg class="a" style="left:1236.5px;top:495.5px" width="8" height="5" viewBox="0 0 8 5"><path d="M0.5 0.5 H7.5 L4 4.5 Z" fill="#808080"/></svg>
<div class="a chk" style="left:561px;top:514px;width:11px;height:11px;"></div>
<div class="a t" style="left:578px;top:512.15px;font-size:14px;line-height:14px;text-align:left;white-space:nowrap;font-weight:bold;color:#111">Strip Down</div>
<div class="a chk" style="left:687px;top:514px;width:11px;height:11px;"></div>
<div class="a t" style="left:703.5px;top:512.15px;font-size:14px;line-height:14px;text-align:left;white-space:nowrap;font-weight:bold;color:#8a1010">On Hold</div>
<div class="a chk" style="left:561px;top:540px;width:11px;height:11px;"></div>
<div class="a t" style="left:579.5px;top:536.69px;font-size:17.5px;line-height:17.5px;text-align:left;white-space:nowrap;font-weight:bold;color:#8a1010">AOG</div>
<div class="a chk" style="left:641px;top:540px;width:11px;height:11px;"></div>
<div class="a t" style="left:657.5px;top:538.15px;font-size:14px;line-height:14px;text-align:left;white-space:nowrap;font-weight:bold;color:#7a1a1a">Urgent</div>
<div class="a chk" style="left:725px;top:540px;width:11px;height:11px;"></div>
<div class="a t" style="left:741px;top:538.15px;font-size:14px;line-height:14px;text-align:left;white-space:nowrap;font-weight:bold;color:#111">Routine</div>
<div class="a t" style="left:817px;top:512.87px;font-size:13.5px;line-height:13.5px;text-align:left;white-space:nowrap;color:#3c3c3c">DeadLine:</div>
<div class="a t" style="left:892px;top:513.84px;font-size:12px;line-height:12px;text-align:left;white-space:nowrap;color:#e02020">*</div>
<div class="a tb" style="left:819.5px;top:527px;width:127px;height:26px;"></div>
<div class="a t" style="left:819.5px;top:530.15px;font-size:14px;line-height:14px;text-align:center;width:127px;color:#1010b0;font-weight:bold">27.08.20</div>
<div class="a lav" style="left:910.5px;top:506.5px;width:37px;height:24px;"></div>
<svg class="a" style="left:921px;top:510px" width="16" height="15" viewBox="0 0 16 15"><rect x="1" y="1" width="14" height="13" fill="#fff" stroke="#202020"/><rect x="1" y="1" width="14" height="3" fill="#2030a0"/><path d="M1 6.5 H15 M1 9 H15 M1 11.5 H15 M4.5 4 V14 M8 4 V14 M11.5 4 V14" stroke="#b03030" stroke-width="0.8"/></svg>
<div class="a t" style="left:952.5px;top:512.87px;font-size:13.5px;line-height:13.5px;text-align:left;white-space:nowrap;color:#3c3c3c">Originator:</div>
<div class="a t" style="left:1034px;top:513.84px;font-size:12px;line-height:12px;text-align:left;white-space:nowrap;color:#e02020">*</div>
<div class="a cb" style="left:950px;top:527.5px;width:70px;height:23px;"></div>
<div class="a btn" style="left:1003px;top:529.5px;width:15px;height:19px;"></div>
<svg class="a" style="left:1006.5px;top:537.0px" width="8" height="5" viewBox="0 0 8 5"><path d="M0.5 0.5 H7.5 L4 4.5 Z" fill="#000"/></svg>
<div class="a t" style="left:953px;top:531.65px;font-size:14px;line-height:14px;text-align:left;white-space:nowrap;color:#1010b0;font-weight:bold">001</div>
<div class="a t" style="left:1185px;top:513.07px;font-size:13.5px;line-height:13.5px;text-align:left;white-space:nowrap;color:#3c3c3c">Name:</div>
<div class="a " style="left:1022.5px;top:528px;width:352px;height:25px;background:#e6e3e6;border:1px solid #3c3c3c"></div>
<div class="a " style="left:547px;top:566.5px;width:391px;height:148px;border-top:1px solid #8c8a85;border-right:1px solid #8c8a85;box-shadow:inset 0 1px 0 #fff,1px 0 0 #fff"></div>
<div class="a " style="left:553px;top:558px;width:224px;height:14px;background:#d4d0c8"></div>
<div class="a t" style="left:555px;top:560.24px;font-size:12px;line-height:12px;text-align:left;white-space:nowrap;font-weight:bold;color:#16164c;letter-spacing:0.35px">Spare Parts Required for Treatment:</div>
<div class="a " style="left:562.5px;top:581.5px;width:361.5px;height:122.5px;background:#828085;border:1px solid;border-color:#808080 #fff #fff #808080;box-shadow:inset 1px 1px 0 #404040"></div>
<div class="a " style="left:563.5px;top:582.5px;width:55.0px;height:16px;background:#d4d0c8;border-right:1px solid #505050;border-bottom:1px solid #303030;box-shadow:inset 1px 1px 0 #fff"></div>
<div class="a t" style="left:567.0px;top:584.34px;font-size:12px;line-height:12px;text-align:left;white-space:nowrap;color:#333">ID:</div>
<div class="a " style="left:618.5px;top:582.5px;width:159.5px;height:16px;background:#d4d0c8;border-right:1px solid #505050;border-bottom:1px solid #303030;box-shadow:inset 1px 1px 0 #fff"></div>
<div class="a t" style="left:622.0px;top:584.34px;font-size:12px;line-height:12px;text-align:left;white-space:nowrap;color:#333">PN:</div>
<div class="a " style="left:778px;top:582.5px;width:145px;height:16px;background:#d4d0c8;border-right:1px solid #505050;border-bottom:1px solid #303030;box-shadow:inset 1px 1px 0 #fff"></div>
<div class="a t" style="left:781.5px;top:584.34px;font-size:12px;line-height:12px;text-align:left;white-space:nowrap;color:#333">Description:</div>
<div class="a " style="left:563.5px;top:598.5px;width:55px;height:16px;background:#ff8282;border-right:1px solid #303030;border-bottom:1px solid #303030"></div>
<div class="a t" style="left:566px;top:601.34px;font-size:12px;line-height:12px;text-align:left;white-space:nowrap;color:#3a1a1a;letter-spacing:0.15px">590532</div>
<div class="a " style="left:618.5px;top:598.5px;width:159.5px;height:16px;background:#fff;border-right:1px solid #d0d0d0;border-bottom:1px solid #303030"></div>
<div class="a t" style="left:622px;top:601.34px;font-size:12px;line-height:12px;text-align:left;white-space:nowrap;color:#333;letter-spacing:0.15px">1000.90.06.WCC_Moon</div>
<div class="a" style="left:778px;top:598.5px;width:145px;height:16px;overflow:hidden;background:#fff;border-bottom:1px solid #303030"><div class="a t" style="left:4px;top:2px;font-size:12px;line-height:12px;letter-spacing:0.15px;color:#333">1000.90.06.WCC MOON TYPE</div></div>
<div class="a " style="left:563.5px;top:690px;width:359.5px;height:13.5px;background:#ecebe6"></div>
<div class="a btn" style="left:563.5px;top:690px;width:13.5px;height:13.5px;"></div>
<svg class="a" style="left:567px;top:693px" width="5" height="8" viewBox="0 0 5 8"><path d="M4.5 0.5 V7.5 L0.5 4 Z" fill="#000"/></svg>
<div class="a btn" style="left:577px;top:690px;width:13.5px;height:13.5px;"></div>
<div class="a btn" style="left:909.5px;top:690px;width:13.5px;height:13.5px;"></div>
<svg class="a" style="left:914px;top:693px" width="5" height="8" viewBox="0 0 5 8"><path d="M0.5 0.5 V7.5 L4.5 4 Z" fill="#000"/></svg>
<div class="a " style="left:938.5px;top:566.5px;width:434.5px;height:148px;border-top:1px solid #8c8a85;border-left:1px solid #8c8a85;border-right:1px solid #8c8a85;box-shadow:inset 1px 1px 0 #fff,1px 0 0 #fff"></div>
<div class="a " style="left:944px;top:558px;width:162px;height:14px;background:#d4d0c8"></div>
<div class="a t" style="left:947px;top:559.54px;font-size:12px;line-height:12px;text-align:left;white-space:nowrap;font-weight:bold;color:#16164c;letter-spacing:0.35px">CMM Manual Information:</div>
<div class="a " style="left:953.5px;top:581.5px;width:405px;height:123.5px;background:#828085;border:1px solid;border-color:#808080 #fff #fff #808080;box-shadow:inset 1px 1px 0 #404040"></div>
<div class="a " style="left:954.5px;top:582.5px;width:234px;height:16.5px;background:#d4d0c8;border-right:1px solid #303030;border-bottom:1px solid #303030;box-shadow:inset 1px 1px 0 #fff"></div>
<div class="a t" style="left:958px;top:584.34px;font-size:12px;line-height:12px;text-align:left;white-space:nowrap;color:#333;letter-spacing:0.15px">No Manuals were Found !</div>
<svg class="a" style="left:0;top:0" width="1391" height="751" viewBox="0 0 1391 751"><path d="M912 107 L1004 199 L972 224 Z" fill="#1597f2"/><circle cx="995" cy="221" r="22.5" fill="#1597f2" stroke="#1a1a1a" stroke-width="1.6"/><circle cx="995" cy="221" r="21" fill="none" stroke="#fff" stroke-width="1.2" opacity="0.6"/><text x="995" y="229.5" font-family="Liberation Sans" font-weight="bold" font-size="24" fill="#fff" text-anchor="middle">6</text></svg>
<div class="a " style="left:0px;top:750px;width:1391px;height:1px;background:#f4f4f0"></div>
</body></html>
